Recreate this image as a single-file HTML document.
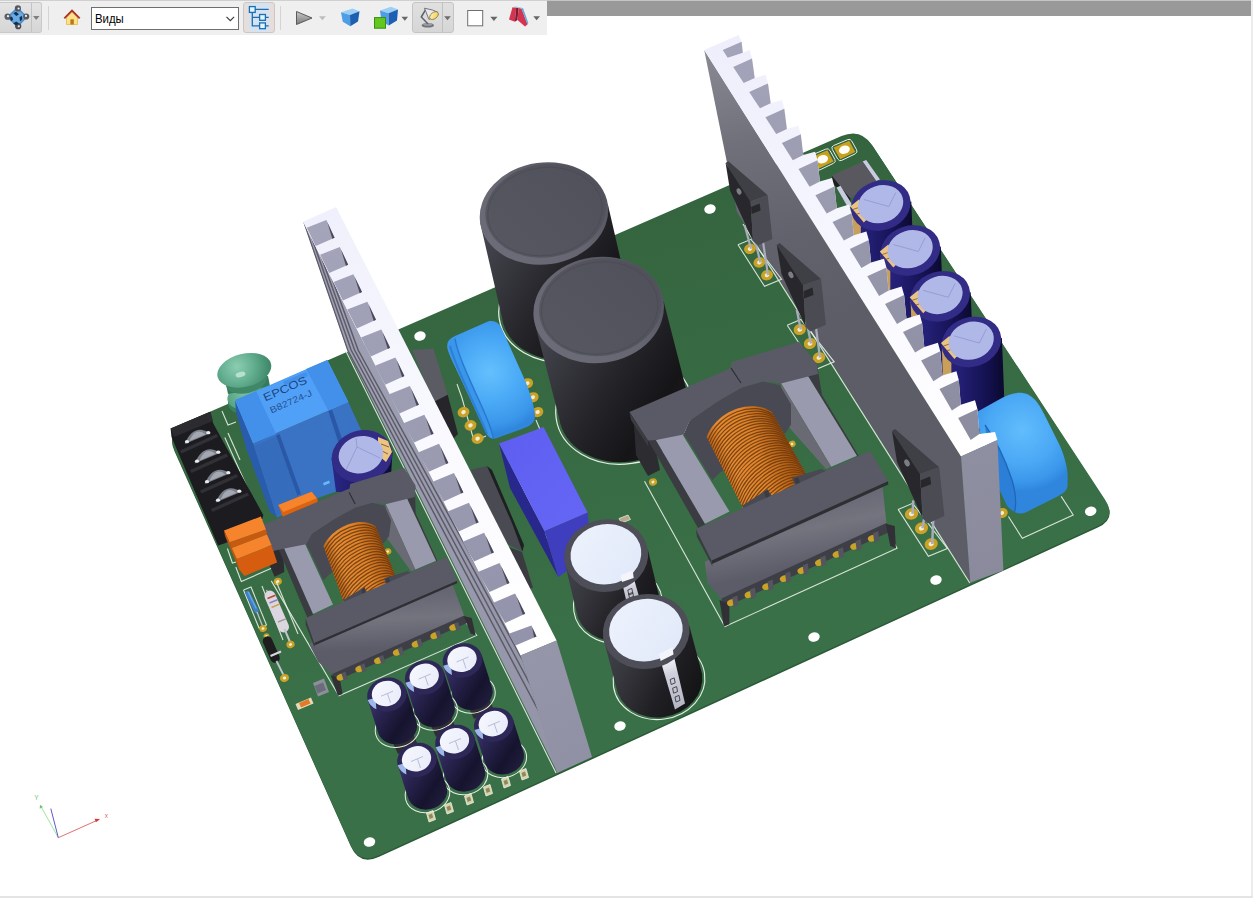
<!DOCTYPE html>
<html lang="ru"><head><meta charset="utf-8"><title>3D PDF</title>
<style>
html,body{margin:0;padding:0;background:#fff;overflow:hidden}
body{width:1253px;height:898px;position:relative;font-family:"Liberation Sans",sans-serif}
#view{position:absolute;left:0;top:0;width:1253px;height:898px}
#strip{position:absolute;left:547px;top:0;width:704px;height:16px;background:#999;border-top:1px solid #c4c4c4;box-sizing:border-box}
#redge{position:absolute;left:1251px;top:0;width:2px;height:898px;background:#ececec}
#bedge{position:absolute;left:0;top:896px;width:1253px;height:2px;background:#e4e4e4}
</style></head><body>
<svg id="view" width="1253" height="898" viewBox="0 0 1253 898">
<defs>
<linearGradient id="gboard" gradientUnits="userSpaceOnUse" x1="600" y1="180" x2="700" y2="620"><stop offset="0" stop-color="#34643e"/><stop offset="1" stop-color="#3a7047"/></linearGradient>
<linearGradient id="gcr0" gradientUnits="userSpaceOnUse" x1="850.8" y1="205.5" x2="911.8" y2="205.5"><stop offset="0" stop-color="#2a2686"/><stop offset="0.3" stop-color="#231f74"/><stop offset="0.75" stop-color="#141150"/><stop offset="1" stop-color="#0c0a30"/></linearGradient>
<linearGradient id="gcr1" gradientUnits="userSpaceOnUse" x1="880.3" y1="250.5" x2="941.3" y2="250.5"><stop offset="0" stop-color="#2a2686"/><stop offset="0.3" stop-color="#231f74"/><stop offset="0.75" stop-color="#141150"/><stop offset="1" stop-color="#0c0a30"/></linearGradient>
<linearGradient id="gcr2" gradientUnits="userSpaceOnUse" x1="910.2" y1="296.3" x2="971.2" y2="296.3"><stop offset="0" stop-color="#2a2686"/><stop offset="0.3" stop-color="#231f74"/><stop offset="0.75" stop-color="#141150"/><stop offset="1" stop-color="#0c0a30"/></linearGradient>
<linearGradient id="gcr3" gradientUnits="userSpaceOnUse" x1="941.4" y1="342" x2="1002.4" y2="342"><stop offset="0" stop-color="#2a2686"/><stop offset="0.3" stop-color="#231f74"/><stop offset="0.75" stop-color="#141150"/><stop offset="1" stop-color="#0c0a30"/></linearGradient>
<radialGradient id="gtor" gradientUnits="userSpaceOnUse" cx="1022" cy="430" r="62"><stop offset="0" stop-color="#62bdfc"/><stop offset="0.55" stop-color="#4aa8f5"/><stop offset="0.85" stop-color="#3a96ea"/><stop offset="1" stop-color="#2f86dc"/></radialGradient>
<linearGradient id="ghs2l" gradientUnits="userSpaceOnUse" x1="700" y1="50" x2="760" y2="330"><stop offset="0" stop-color="#8a8a95"/><stop offset="0.35" stop-color="#70707b"/><stop offset="0.7" stop-color="#62626c"/><stop offset="1" stop-color="#5d5d67"/></linearGradient>
<linearGradient id="ghs2w" gradientUnits="userSpaceOnUse" x1="710" y1="40" x2="990" y2="440"><stop offset="0" stop-color="#eeeefc"/><stop offset="0.6" stop-color="#f8f8ff"/><stop offset="1" stop-color="#ffffff"/></linearGradient>
<linearGradient id="ghs2g" gradientUnits="userSpaceOnUse" x1="720" y1="40" x2="980" y2="440"><stop offset="0" stop-color="#a4a4ba"/><stop offset="1" stop-color="#8c8ca0"/></linearGradient>
<linearGradient id="ghs2f" gradientUnits="userSpaceOnUse" x1="960" y1="450" x2="1000" y2="580"><stop offset="0" stop-color="#8f8fa2"/><stop offset="1" stop-color="#8a8a9c"/></linearGradient>
<linearGradient id="gbc1" gradientUnits="userSpaceOnUse" x1="479.5" y1="213.5" x2="630.5" y2="309"><stop offset="0" stop-color="#4c4c56"/><stop offset="0.2" stop-color="#3e3e46"/><stop offset="0.55" stop-color="#25252a"/><stop offset="0.85" stop-color="#151518"/><stop offset="1" stop-color="#1b1b1f"/></linearGradient>
<linearGradient id="gbr1" gradientUnits="userSpaceOnUse" x1="479.5" y1="264.5" x2="608.5" y2="162.5"><stop offset="0" stop-color="#6e6e7a"/><stop offset="0.5" stop-color="#666672"/><stop offset="1" stop-color="#4c4c56"/></linearGradient>
<linearGradient id="gbt1" gradientUnits="userSpaceOnUse" x1="479.5" y1="264.5" x2="608.5" y2="162.5"><stop offset="0" stop-color="#585863"/><stop offset="1" stop-color="#50505a"/></linearGradient>
<radialGradient id="gdisc" gradientUnits="userSpaceOnUse" cx="490" cy="372" r="62"><stop offset="0" stop-color="#64c0fd"/><stop offset="0.5" stop-color="#4aa9f6"/><stop offset="0.85" stop-color="#3a96ea"/><stop offset="1" stop-color="#2f86dc"/></radialGradient>
<linearGradient id="gbc2" gradientUnits="userSpaceOnUse" x1="533.2" y1="310" x2="689.5" y2="409"><stop offset="0" stop-color="#4c4c56"/><stop offset="0.2" stop-color="#3e3e46"/><stop offset="0.55" stop-color="#25252a"/><stop offset="0.85" stop-color="#151518"/><stop offset="1" stop-color="#1b1b1f"/></linearGradient>
<linearGradient id="gbr2" gradientUnits="userSpaceOnUse" x1="533.2" y1="363" x2="664.2" y2="257"><stop offset="0" stop-color="#6e6e7a"/><stop offset="0.5" stop-color="#666672"/><stop offset="1" stop-color="#4c4c56"/></linearGradient>
<linearGradient id="gbt2" gradientUnits="userSpaceOnUse" x1="533.2" y1="363" x2="664.2" y2="257"><stop offset="0" stop-color="#585863"/><stop offset="1" stop-color="#50505a"/></linearGradient>
<linearGradient id="gpurp" gradientUnits="userSpaceOnUse" x1="500" y1="440" x2="590" y2="530"><stop offset="0" stop-color="#5e5ef0"/><stop offset="1" stop-color="#6666f6"/></linearGradient>
<linearGradient id="gmc1" gradientUnits="userSpaceOnUse" x1="564.1" y1="555.6" x2="660.1" y2="605"><stop offset="0" stop-color="#45454e"/><stop offset="0.3" stop-color="#38383f"/><stop offset="0.7" stop-color="#202024"/><stop offset="1" stop-color="#151518"/></linearGradient>
<linearGradient id="gms1" gradientUnits="userSpaceOnUse" x1="622" y1="582" x2="627" y2="604"><stop offset="0" stop-color="#f4f5fa"/><stop offset="0.3" stop-color="#d0d1dc"/><stop offset="1" stop-color="#b4b5c2"/></linearGradient>
<linearGradient id="gmt1" gradientUnits="userSpaceOnUse" x1="564.1" y1="519.3" x2="648.3" y2="591.9"><stop offset="0" stop-color="#eef3fd"/><stop offset="1" stop-color="#dfe7f8"/></linearGradient>
<linearGradient id="gmc2" gradientUnits="userSpaceOnUse" x1="602.7" y1="631.5" x2="702.5" y2="680"><stop offset="0" stop-color="#45454e"/><stop offset="0.3" stop-color="#38383f"/><stop offset="0.7" stop-color="#202024"/><stop offset="1" stop-color="#151518"/></linearGradient>
<linearGradient id="gms2" gradientUnits="userSpaceOnUse" x1="660.6" y1="661" x2="675" y2="709.5"><stop offset="0" stop-color="#f4f5fa"/><stop offset="0.3" stop-color="#d0d1dc"/><stop offset="1" stop-color="#b4b5c2"/></linearGradient>
<linearGradient id="gmt2" gradientUnits="userSpaceOnUse" x1="602.7" y1="594.1" x2="689.7" y2="668.9"><stop offset="0" stop-color="#eef3fd"/><stop offset="1" stop-color="#dfe7f8"/></linearGradient>
<linearGradient id="gcoil1" gradientUnits="userSpaceOnUse" x1="706.7" y1="437" x2="772" y2="412.1"><stop offset="0" stop-color="#b86418"/><stop offset="0.2" stop-color="#e68c32"/><stop offset="0.6" stop-color="#e08429"/><stop offset="1" stop-color="#a8560f"/></linearGradient>
<linearGradient id="gbob1" gradientUnits="userSpaceOnUse" x1="790" y1="500" x2="803" y2="568"><stop offset="0" stop-color="#666673"/><stop offset="0.45" stop-color="#74747f"/><stop offset="1" stop-color="#5c5c69"/></linearGradient>
<linearGradient id="ghs1l" gradientUnits="userSpaceOnUse" x1="300" y1="220" x2="560" y2="770"><stop offset="0" stop-color="#a2a2b6"/><stop offset="1" stop-color="#9494a8"/></linearGradient>
<clipPath id="chs1"><polygon points="303.1,221.8 520.6,655.6 557.6,772.6 347,350"/></clipPath>
<linearGradient id="ghs1w" gradientUnits="userSpaceOnUse" x1="310" y1="215" x2="540" y2="650"><stop offset="0" stop-color="#f0f0fc"/><stop offset="0.6" stop-color="#fafaff"/><stop offset="1" stop-color="#ffffff"/></linearGradient>
<linearGradient id="ghs1g" gradientUnits="userSpaceOnUse" x1="300" y1="220" x2="540" y2="650"><stop offset="0" stop-color="#a4a4ba"/><stop offset="1" stop-color="#9292aa"/></linearGradient>
<linearGradient id="ghs1f" gradientUnits="userSpaceOnUse" x1="520" y1="650" x2="590" y2="770"><stop offset="0" stop-color="#9696aa"/><stop offset="1" stop-color="#9090a4"/></linearGradient>
<radialGradient id="gchoke" gradientUnits="userSpaceOnUse" cx="238" cy="365" r="32"><stop offset="0" stop-color="#8ccdb2"/><stop offset="0.5" stop-color="#66b092"/><stop offset="1" stop-color="#3f8b6b"/></radialGradient>
<radialGradient id="gchoke2" gradientUnits="userSpaceOnUse" cx="244" cy="392" r="26"><stop offset="0" stop-color="#78bfa2"/><stop offset="0.6" stop-color="#5aa687"/><stop offset="1" stop-color="#3b8363"/></radialGradient>
<linearGradient id="gsc" gradientUnits="userSpaceOnUse" x1="332" y1="456" x2="392" y2="456"><stop offset="0" stop-color="#2a2686"/><stop offset="0.5" stop-color="#1e1a68"/><stop offset="1" stop-color="#0e0c34"/></linearGradient>
<linearGradient id="gcoil2" gradientUnits="userSpaceOnUse" x1="323.4" y1="546.2" x2="375.8" y2="526.7"><stop offset="0" stop-color="#b86418"/><stop offset="0.2" stop-color="#e68c32"/><stop offset="0.6" stop-color="#e08429"/><stop offset="1" stop-color="#a8560f"/></linearGradient>
<linearGradient id="gbob2" gradientUnits="userSpaceOnUse" x1="380.4" y1="595.4" x2="383.3" y2="648.6"><stop offset="0" stop-color="#666673"/><stop offset="0.45" stop-color="#74747f"/><stop offset="1" stop-color="#5c5c69"/></linearGradient>
<linearGradient id="gsm0" gradientUnits="userSpaceOnUse" x1="442.5" y1="660.5" x2="493" y2="693.5"><stop offset="0" stop-color="#45407a"/><stop offset="0.3" stop-color="#2c2756"/><stop offset="0.75" stop-color="#16132e"/><stop offset="1" stop-color="#201d3c"/></linearGradient>
<linearGradient id="gst0" gradientUnits="userSpaceOnUse" x1="442.5" y1="643.5" x2="482.5" y2="677.5"><stop offset="0" stop-color="#fafbff"/><stop offset="1" stop-color="#e4e7f8"/></linearGradient>
<linearGradient id="gsm1" gradientUnits="userSpaceOnUse" x1="404.7" y1="677.5" x2="455.2" y2="710.5"><stop offset="0" stop-color="#45407a"/><stop offset="0.3" stop-color="#2c2756"/><stop offset="0.75" stop-color="#16132e"/><stop offset="1" stop-color="#201d3c"/></linearGradient>
<linearGradient id="gst1" gradientUnits="userSpaceOnUse" x1="404.7" y1="660.5" x2="444.7" y2="694.5"><stop offset="0" stop-color="#fafbff"/><stop offset="1" stop-color="#e4e7f8"/></linearGradient>
<linearGradient id="gsm2" gradientUnits="userSpaceOnUse" x1="367" y1="694.7" x2="417.5" y2="727.7"><stop offset="0" stop-color="#45407a"/><stop offset="0.3" stop-color="#2c2756"/><stop offset="0.75" stop-color="#16132e"/><stop offset="1" stop-color="#201d3c"/></linearGradient>
<linearGradient id="gst2" gradientUnits="userSpaceOnUse" x1="367" y1="677.7" x2="407" y2="711.7"><stop offset="0" stop-color="#fafbff"/><stop offset="1" stop-color="#e4e7f8"/></linearGradient>
<linearGradient id="gsm3" gradientUnits="userSpaceOnUse" x1="473.8" y1="724.8" x2="524.3" y2="757.8"><stop offset="0" stop-color="#45407a"/><stop offset="0.3" stop-color="#2c2756"/><stop offset="0.75" stop-color="#16132e"/><stop offset="1" stop-color="#201d3c"/></linearGradient>
<linearGradient id="gst3" gradientUnits="userSpaceOnUse" x1="473.8" y1="707.8" x2="513.8" y2="741.8"><stop offset="0" stop-color="#fafbff"/><stop offset="1" stop-color="#e4e7f8"/></linearGradient>
<linearGradient id="gsm4" gradientUnits="userSpaceOnUse" x1="435" y1="742" x2="485.5" y2="775"><stop offset="0" stop-color="#45407a"/><stop offset="0.3" stop-color="#2c2756"/><stop offset="0.75" stop-color="#16132e"/><stop offset="1" stop-color="#201d3c"/></linearGradient>
<linearGradient id="gst4" gradientUnits="userSpaceOnUse" x1="435" y1="725" x2="475" y2="759"><stop offset="0" stop-color="#fafbff"/><stop offset="1" stop-color="#e4e7f8"/></linearGradient>
<linearGradient id="gsm5" gradientUnits="userSpaceOnUse" x1="397" y1="760" x2="447.5" y2="793"><stop offset="0" stop-color="#45407a"/><stop offset="0.3" stop-color="#2c2756"/><stop offset="0.75" stop-color="#16132e"/><stop offset="1" stop-color="#201d3c"/></linearGradient>
<linearGradient id="gst5" gradientUnits="userSpaceOnUse" x1="397" y1="743" x2="437" y2="777"><stop offset="0" stop-color="#fafbff"/><stop offset="1" stop-color="#e4e7f8"/></linearGradient>
</defs>
<path d="M174.6 451.4Q166 432.2 185.2 423.8L842 137.1Q861.2 128.7 872.7 146.3L1105.4 501.2Q1116.9 518.8 1097.8 527.5L378.6 857.1Q359.5 865.8 350.9 846.6Z" fill="#2a5a38"/>
<path d="M174.6 450.2Q166 431 185.2 422.6L841.5 136.1Q860.7 127.7 872.2 145.3L1105.1 499.7Q1116.6 517.3 1097.5 526L378.3 855.6Q359.2 864.3 350.6 845.1Z" fill="url(#gboard)"/>
<ellipse cx="420" cy="336" rx="5.8" ry="4.7" fill="#ffffff" transform="rotate(-15 420 336)"/>
<ellipse cx="710" cy="209" rx="5.8" ry="4.7" fill="#ffffff" transform="rotate(-15 710 209)"/>
<ellipse cx="369.5" cy="842" rx="5.8" ry="4.7" fill="#ffffff" transform="rotate(-15 369.5 842)"/>
<ellipse cx="814" cy="637" rx="5.8" ry="4.7" fill="#ffffff" transform="rotate(-15 814 637)"/>
<ellipse cx="1090.7" cy="511.2" rx="5.8" ry="4.7" fill="#ffffff" transform="rotate(-15 1090.7 511.2)"/>
<ellipse cx="936" cy="580" rx="5.8" ry="4.7" fill="#ffffff" transform="rotate(-15 936 580)"/>
<ellipse cx="620" cy="726" rx="5.8" ry="4.7" fill="#ffffff" transform="rotate(-15 620 726)"/>
<path d="M810.5 158.9Q809 156.3 811.7 155.1L825.8 149.1Q828.6 147.9 830 150.6L834.8 159.3Q836.2 161.9 833.5 163.3L820.1 169.8Q817.4 171.1 815.9 168.5Z" fill="none" stroke="#e8efe8" stroke-width="1" stroke-linejoin="round"/>
<polygon points="811.7,156.9 827.4,150.2 833.5,161.4 818.4,168.7" fill="#c6a11f"/>
<ellipse cx="822.6" cy="159.2" rx="5.6" ry="4.1" fill="#fffdf6" transform="rotate(-18 822.6 159.2)"/>
<path d="M832.3 149.4Q830.8 146.8 833.5 145.6L847.6 139.6Q850.4 138.4 851.8 141.1L856.6 149.8Q858 152.4 855.3 153.8L841.9 160.3Q839.1 161.6 837.7 159Z" fill="none" stroke="#e8efe8" stroke-width="1" stroke-linejoin="round"/>
<polygon points="833.5,147.4 849.2,140.7 855.3,151.9 840.2,159.2" fill="#c6a11f"/>
<ellipse cx="844.4" cy="149.7" rx="5.6" ry="4.1" fill="#fffdf6" transform="rotate(-18 844.4 149.7)"/>
<polyline points="1008.4,516.5 1022.3,538.3 1073.2,514.9 1061.2,496.4" fill="none" stroke="#e8efe8" stroke-width="1.1" stroke-opacity="0.9"/>
<ellipse cx="1002" cy="513" rx="5.8" ry="5" fill="#c9a227" transform="rotate(-20 1002 513)"/>
<ellipse cx="1002" cy="513" rx="2.2" ry="1.9" fill="#f4ecd0" transform="rotate(-20 1002 513)"/>
<polygon points="862.6,161.4 866.2,160 880,179.5 876,181" fill="#c9cbe0"/>
<polygon points="831.8,175.4 850.3,198.3 851,206 833,183" fill="#1e1e22"/>
<polygon points="831.8,175.4 862.6,161.4 877,182 850.3,198.3" fill="#5a585f"/>
<polygon points="836.5,187.5 840.5,185.8 853,206 848,207.5" fill="#c9cbe0"/>
<path d="M850.8 207.5 L853.8 273.5 A30 25 -15 0 0 913.8 265.5 L911.3 201.5 Z" fill="url(#gcr0)"/>
<polygon points="851.3,209.5 860.8,219.5 860.8,245.5 852.3,245.5" fill="#c8a05a"/>
<ellipse cx="880.8" cy="205.5" rx="30.3" ry="24.8" fill="#322c86" transform="rotate(-18 880.8 205.5)"/>
<path d="M850.3 206.5 L858.8 199.5 L868.8 217.5 L863.8 222.5 Z" fill="#ecc482"/>
<polyline points="852.8,209.5 861.8,206.5" fill="none" stroke="#6b4a2a" stroke-width="0.7"/>
<polyline points="855.8,214.5 864.8,211.5" fill="none" stroke="#6b4a2a" stroke-width="0.7"/>
<ellipse cx="880.6" cy="204.2" rx="23" ry="18.7" fill="#b0b8e8" transform="rotate(-18 880.6 204.2)"/>
<polyline points="863.8,199.5 888.8,206.5 895.8,192.5" fill="none" stroke="#8d8fc8" stroke-width="0.7"/>
<path d="M880.3 252.5 L883.3 318.5 A30 25 -15 0 0 943.3 310.5 L940.8 246.5 Z" fill="url(#gcr1)"/>
<polygon points="880.8,254.5 890.3,264.5 890.3,290.5 881.8,290.5" fill="#c8a05a"/>
<ellipse cx="910.3" cy="250.5" rx="30.3" ry="24.8" fill="#322c86" transform="rotate(-18 910.3 250.5)"/>
<path d="M879.8 251.5 L888.3 244.5 L898.3 262.5 L893.3 267.5 Z" fill="#ecc482"/>
<polyline points="882.3,254.5 891.3,251.5" fill="none" stroke="#6b4a2a" stroke-width="0.7"/>
<polyline points="885.3,259.5 894.3,256.5" fill="none" stroke="#6b4a2a" stroke-width="0.7"/>
<ellipse cx="910.1" cy="249.2" rx="23" ry="18.7" fill="#b0b8e8" transform="rotate(-18 910.1 249.2)"/>
<polyline points="893.3,244.5 918.3,251.5 925.3,237.5" fill="none" stroke="#8d8fc8" stroke-width="0.7"/>
<path d="M910.2 298.3 L913.2 364.3 A30 25 -15 0 0 973.2 356.3 L970.7 292.3 Z" fill="url(#gcr2)"/>
<polygon points="910.7,300.3 920.2,310.3 920.2,336.3 911.7,336.3" fill="#c8a05a"/>
<ellipse cx="940.2" cy="296.3" rx="30.3" ry="24.8" fill="#322c86" transform="rotate(-18 940.2 296.3)"/>
<path d="M909.7 297.3 L918.2 290.3 L928.2 308.3 L923.2 313.3 Z" fill="#ecc482"/>
<polyline points="912.2,300.3 921.2,297.3" fill="none" stroke="#6b4a2a" stroke-width="0.7"/>
<polyline points="915.2,305.3 924.2,302.3" fill="none" stroke="#6b4a2a" stroke-width="0.7"/>
<ellipse cx="940" cy="295" rx="23" ry="18.7" fill="#b0b8e8" transform="rotate(-18 940 295)"/>
<polyline points="923.2,290.3 948.2,297.3 955.2,283.3" fill="none" stroke="#8d8fc8" stroke-width="0.7"/>
<path d="M941.4 344 L944.4 410 A30 25 -15 0 0 1004.4 402 L1001.9 338 Z" fill="url(#gcr3)"/>
<polygon points="941.9,346 951.4,356 951.4,382 942.9,382" fill="#c8a05a"/>
<ellipse cx="971.4" cy="342" rx="30.3" ry="24.8" fill="#322c86" transform="rotate(-18 971.4 342)"/>
<path d="M940.9 343 L949.4 336 L959.4 354 L954.4 359 Z" fill="#ecc482"/>
<polyline points="943.4,346 952.4,343" fill="none" stroke="#6b4a2a" stroke-width="0.7"/>
<polyline points="946.4,351 955.4,348" fill="none" stroke="#6b4a2a" stroke-width="0.7"/>
<ellipse cx="971.2" cy="340.7" rx="23" ry="18.7" fill="#b0b8e8" transform="rotate(-18 971.2 340.7)"/>
<polyline points="954.4,336 979.4,343 986.4,329" fill="none" stroke="#8d8fc8" stroke-width="0.7"/>
<path d="M975 413 L1000.5 398.7 C1010 393 1020 391 1028.6 394.8 C1036 399 1040 406 1044.2 414.3 L1059.8 445.5 C1064 455 1067 466 1067.6 473.5 L1067.6 486 C1067 492 1060 495 1053.5 498.5 L1025.5 512.5 C1021 514 1017 513.5 1014.6 511.7 C1010 509 1008 507 1006.8 504.7 L990 470 Z" fill="url(#gtor)"/>
<path d="M985 425 C996 440 1006 462 1012 480 C1016 494 1016 506 1014.6 511.7 C1010 509 1008 507 1006.8 504.7 L990 470 Z" fill="#2c7fd6"/>
<path d="M985 425 C996 440 1006 462 1012 480 C1016 494 1016 506 1014.6 511.7" fill="none" stroke="#1f66b8" stroke-width="1.3" stroke-linejoin="round"/>
<polygon points="704.2,50.1 961,456.5 970.3,582.5 737,212" fill="url(#ghs2l)"/>
<polyline points="743,224 969.8,583" fill="none" stroke="#e8efe8" stroke-width="1.2" stroke-opacity="0.9"/>
<polygon points="704.2,50.1 738.6,35 741.6,41.8 742.8,52.7 749.6,49.9 752,58.5 754.7,77.9 765.6,74.8 768,83.4 770.7,103.3 781.9,100.1 784.3,108.7 786.9,129 798.4,125.7 800.8,134.3 803.3,155.1 815.1,151.7 817.5,160.3 819.9,181.5 832,178 834.4,186.6 836.8,208.2 849.1,204.6 851.5,213.2 853.9,235.2 866.4,231.5 868.8,240.1 871.1,262.6 884,258.8 886.4,267.4 888.6,290.4 901.7,286.4 904.1,295 906.4,318.5 919.7,314.4 922.1,323 924.3,346.9 937.9,342.7 940.3,351.3 942.4,375.6 956.4,371.3 958.8,379.9 960.8,404.7 975,400.3 977.4,408.9 979.4,434.1 995,431.9 997.4,440 961,456.5" fill="url(#ghs2w)"/>
<polygon points="722.7,50 741.6,41.8 742.8,52.7 727.7,57.7" fill="url(#ghs2g)"/>
<polygon points="733.2,66.9 752,58.5 754.7,77.9 743.7,82.9" fill="url(#ghs2g)"/>
<polygon points="749.2,91.9 768,83.4 770.7,103.3 759.9,108.3" fill="url(#ghs2g)"/>
<polygon points="765.4,117.2 784.3,108.7 786.9,129 776.2,134.1" fill="url(#ghs2g)"/>
<polygon points="781.9,142.9 800.8,134.3 803.3,155.1 792.8,160.2" fill="url(#ghs2g)"/>
<polygon points="798.5,168.9 817.5,160.3 819.9,181.5 809.6,186.7" fill="url(#ghs2g)"/>
<polygon points="815.4,195.3 834.4,186.6 836.8,208.2 826.7,213.5" fill="url(#ghs2g)"/>
<polygon points="832.5,221.9 851.5,213.2 853.9,235.2 843.9,240.6" fill="url(#ghs2g)"/>
<polygon points="849.8,249 868.8,240.1 871.1,262.6 861.4,268.1" fill="url(#ghs2g)"/>
<polygon points="867.3,276.3 886.4,267.4 888.6,290.4 879.1,295.9" fill="url(#ghs2g)"/>
<polygon points="885,304 904.1,295 906.4,318.5 897,324" fill="url(#ghs2g)"/>
<polygon points="903,332 922.1,323 924.3,346.9 915.1,352.5" fill="url(#ghs2g)"/>
<polygon points="921.1,360.4 940.3,351.3 942.4,375.6 933.4,381.3" fill="url(#ghs2g)"/>
<polygon points="939.5,389.1 958.8,379.9 960.8,404.7 951.9,410.4" fill="url(#ghs2g)"/>
<polygon points="958.1,418.1 977.4,408.9 979.4,434.1 970.7,439.9" fill="url(#ghs2g)"/>
<polygon points="961,456.5 997.4,440 1003.4,570.4 970.3,582.5" fill="url(#ghs2f)"/>
<polyline points="738,244.8 751,239.3 781.5,279.2 764.5,286.2 738,244.8" fill="none" stroke="#e8efe8" stroke-width="1.1" stroke-opacity="0.9"/>
<ellipse cx="750" cy="248.8" rx="6" ry="5.2" fill="#c9a227" transform="rotate(-20 750 248.8)"/>
<ellipse cx="750" cy="248.8" rx="2.3" ry="2" fill="#f4ecd0" transform="rotate(-20 750 248.8)"/>
<ellipse cx="759.4" cy="262.4" rx="6" ry="5.2" fill="#c9a227" transform="rotate(-20 759.4 262.4)"/>
<ellipse cx="759.4" cy="262.4" rx="2.3" ry="2" fill="#f4ecd0" transform="rotate(-20 759.4 262.4)"/>
<ellipse cx="767" cy="275.2" rx="6" ry="5.2" fill="#c9a227" transform="rotate(-20 767 275.2)"/>
<ellipse cx="767" cy="275.2" rx="2.3" ry="2" fill="#f4ecd0" transform="rotate(-20 767 275.2)"/>
<polyline points="744.6,225 751,248.8" fill="none" stroke="#a9acbc" stroke-width="2.2"/>
<polyline points="754.6,239 760.4,262.4" fill="none" stroke="#a9acbc" stroke-width="2.2"/>
<polyline points="762.6,239 768,275.2" fill="none" stroke="#a9acbc" stroke-width="2.2"/>
<polygon points="725.6,163 728.3,161.2 767.7,195.3 750.6,201.4" fill="#3f3f46"/>
<polygon points="725.6,163 750.6,201.4 753,241 730.1,190.7" fill="#27272c"/>
<polygon points="750.6,201.4 767.7,195.3 772.4,239 757.6,245.5 753,241" fill="#4b4b53"/>
<polygon points="751.1,207 759.6,203.5 760.6,210.5 751.6,214" fill="#27272c"/>
<ellipse cx="739" cy="191.5" rx="2.2" ry="3.3" fill="#7d7d86" transform="rotate(-25 739 191.5)"/>
<polyline points="787.2,325.3 800.8,319.5 834.2,361.8 816.4,369.2 787.2,325.3" fill="none" stroke="#e8efe8" stroke-width="1.1" stroke-opacity="0.9"/>
<ellipse cx="799.8" cy="329.5" rx="6.3" ry="5.5" fill="#c9a227" transform="rotate(-20 799.8 329.5)"/>
<ellipse cx="799.8" cy="329.5" rx="2.5" ry="2.1" fill="#f4ecd0" transform="rotate(-20 799.8 329.5)"/>
<ellipse cx="810" cy="343.5" rx="6.3" ry="5.5" fill="#c9a227" transform="rotate(-20 810 343.5)"/>
<ellipse cx="810" cy="343.5" rx="2.5" ry="2.1" fill="#f4ecd0" transform="rotate(-20 810 343.5)"/>
<ellipse cx="819" cy="357.6" rx="6.3" ry="5.5" fill="#c9a227" transform="rotate(-20 819 357.6)"/>
<ellipse cx="819" cy="357.6" rx="2.5" ry="2.1" fill="#f4ecd0" transform="rotate(-20 819 357.6)"/>
<polyline points="796.8,310.1 800.8,329.5" fill="none" stroke="#a9acbc" stroke-width="2.3100000000000005"/>
<polyline points="807.2,324.8 811,343.5" fill="none" stroke="#a9acbc" stroke-width="2.3100000000000005"/>
<polyline points="815.6,324.8 820,357.6" fill="none" stroke="#a9acbc" stroke-width="2.3100000000000005"/>
<polygon points="776.8,245 779.6,243.1 821,278.9 803,285.3" fill="#3f3f46"/>
<polygon points="776.8,245 803,285.3 805.6,326.9 781.5,274.1" fill="#27272c"/>
<polygon points="803,285.3 821,278.9 825.9,324.8 810.4,331.6 805.6,326.9" fill="#4b4b53"/>
<polygon points="803.6,291.2 812.5,287.5 813.5,294.9 804.1,298.6" fill="#27272c"/>
<ellipse cx="790.9" cy="274.9" rx="2.3" ry="3.5" fill="#7d7d86" transform="rotate(-25 790.9 274.9)"/>
<polyline points="898.1,509.4 912.6,503.3 947.4,548.5 928.4,556.3 898.1,509.4" fill="none" stroke="#e8efe8" stroke-width="1.1" stroke-opacity="0.9"/>
<ellipse cx="911.5" cy="513.9" rx="6.7" ry="5.8" fill="#c9a227" transform="rotate(-20 911.5 513.9)"/>
<ellipse cx="911.5" cy="513.9" rx="2.6" ry="2.2" fill="#f4ecd0" transform="rotate(-20 911.5 513.9)"/>
<ellipse cx="921.5" cy="528.3" rx="6.7" ry="5.8" fill="#c9a227" transform="rotate(-20 921.5 528.3)"/>
<ellipse cx="921.5" cy="528.3" rx="2.6" ry="2.2" fill="#f4ecd0" transform="rotate(-20 921.5 528.3)"/>
<ellipse cx="931.2" cy="544" rx="6.7" ry="5.8" fill="#c9a227" transform="rotate(-20 931.2 544)"/>
<ellipse cx="931.2" cy="544" rx="2.6" ry="2.2" fill="#f4ecd0" transform="rotate(-20 931.2 544)"/>
<polyline points="913.3,500.4 912.5,513.9" fill="none" stroke="#a9acbc" stroke-width="2.4640000000000004"/>
<polyline points="924.5,516.1 922.5,528.3" fill="none" stroke="#a9acbc" stroke-width="2.4640000000000004"/>
<polyline points="933.4,516.1 932.2,544" fill="none" stroke="#a9acbc" stroke-width="2.4640000000000004"/>
<polygon points="892,431 895,429 939.2,467.2 920,474" fill="#3f3f46"/>
<polygon points="892,431 920,474 922.7,518.4 897,462" fill="#27272c"/>
<polygon points="920,474 939.2,467.2 944.4,516.1 927.8,523.4 922.7,518.4" fill="#4b4b53"/>
<polygon points="920.6,480.3 930.1,476.4 931.2,484.2 921.1,488.1" fill="#27272c"/>
<ellipse cx="907" cy="462.9" rx="2.5" ry="3.7" fill="#7d7d86" transform="rotate(-25 907 462.9)"/>
<ellipse cx="566" cy="309" rx="67.5" ry="53" fill="none" transform="rotate(-8 566 309)" stroke="#e8efe8" stroke-width="1.2"/>
<path d="M480.1 222.5 L502.1 318 A64.5 51 -8 0 0 629.9 300 L607.9 204.5 Z" fill="url(#gbc1)"/>
<ellipse cx="544" cy="213.5" rx="64.5" ry="51" fill="url(#gbr1)" transform="rotate(-8 544 213.5)"/>
<ellipse cx="545.6" cy="210.9" rx="60.5" ry="46.5" fill="url(#gbt1)" transform="rotate(-8 545.6 210.9)"/>
<ellipse cx="545" cy="211.5" rx="57.5" ry="44" fill="none" transform="rotate(-8 545 211.5)" stroke="#494952" stroke-width="0.7"/>
<polyline points="457,384 462,398 474,441 486,436" fill="none" stroke="#e8efe8" stroke-width="1.1" stroke-opacity="0.9"/>
<polyline points="536,420 541,432" fill="none" stroke="#e8efe8" stroke-width="1.1" stroke-opacity="0.9"/>
<ellipse cx="463.5" cy="412.1" rx="6" ry="5.2" fill="#c9a227" transform="rotate(-20 463.5 412.1)"/>
<ellipse cx="463.5" cy="412.1" rx="2.3" ry="2" fill="#f4ecd0" transform="rotate(-20 463.5 412.1)"/>
<ellipse cx="470.5" cy="425.4" rx="6" ry="5.2" fill="#c9a227" transform="rotate(-20 470.5 425.4)"/>
<ellipse cx="470.5" cy="425.4" rx="2.3" ry="2" fill="#f4ecd0" transform="rotate(-20 470.5 425.4)"/>
<ellipse cx="477.6" cy="438.6" rx="6" ry="5.2" fill="#c9a227" transform="rotate(-20 477.6 438.6)"/>
<ellipse cx="477.6" cy="438.6" rx="2.3" ry="2" fill="#f4ecd0" transform="rotate(-20 477.6 438.6)"/>
<ellipse cx="527.4" cy="383.3" rx="5.8" ry="5" fill="#c9a227" transform="rotate(-20 527.4 383.3)"/>
<ellipse cx="527.4" cy="383.3" rx="2.2" ry="1.9" fill="#f4ecd0" transform="rotate(-20 527.4 383.3)"/>
<ellipse cx="532.9" cy="397.3" rx="5.8" ry="5" fill="#c9a227" transform="rotate(-20 532.9 397.3)"/>
<ellipse cx="532.9" cy="397.3" rx="2.2" ry="1.9" fill="#f4ecd0" transform="rotate(-20 532.9 397.3)"/>
<ellipse cx="537.6" cy="412.1" rx="5.8" ry="5" fill="#c9a227" transform="rotate(-20 537.6 412.1)"/>
<ellipse cx="537.6" cy="412.1" rx="2.2" ry="1.9" fill="#f4ecd0" transform="rotate(-20 537.6 412.1)"/>
<path d="M447.5 348 C446.5 342 449 339 455 336 L488 321.5 C494 320 498 322 501 327 L524 378 C530 392 535 408 535 416 C535 423 530 426 522 429 L497 438 C491 440 488 437 485 431 L461 379 C455 366 448.5 354 447.5 348 Z" fill="url(#gdisc)"/>
<path d="M447.5 348 C448 343 451 340 455 338.5 C457 352 467 374 477 396 C485 413 491 427 493.5 438.5 C489 438 487 435 485 431 L461 379 C455 366 448.5 354 447.5 348 Z" fill="#3a96ea"/>
<path d="M455 338.5 C457 352 467 374 477 396 C485 413 491 427 493.5 438.5" fill="none" stroke="#2a78cc" stroke-width="1.4" stroke-linejoin="round"/>
<path d="M450 346 C453 358 462 378 471 398 C478 413 484 426 487 434" fill="none" stroke="#2672c4" stroke-width="2.2" stroke-linejoin="round" stroke-opacity="0.6"/>
<ellipse cx="624" cy="409" rx="68.5" ry="55" fill="none" transform="rotate(-8 624 409)" stroke="#e8efe8" stroke-width="1.2"/>
<path d="M533.8 319.1 L559.1 418.1 A65.5 53 -8 0 0 688.9 399.9 L663.6 300.9 Z" fill="url(#gbc2)"/>
<ellipse cx="598.7" cy="310" rx="65.5" ry="53" fill="url(#gbr2)" transform="rotate(-8 598.7 310)"/>
<ellipse cx="600.3" cy="307.4" rx="61.5" ry="48.5" fill="url(#gbt2)" transform="rotate(-8 600.3 307.4)"/>
<ellipse cx="599.7" cy="308" rx="58.5" ry="46" fill="none" transform="rotate(-8 599.7 308)" stroke="#494952" stroke-width="0.7"/>
<polyline points="505,452 548,540" fill="none" stroke="#e8efe8" stroke-width="1.1" stroke-opacity="0.9"/>
<polygon points="499,443.5 544.5,531 558.4,577 510,488" fill="#28288c"/>
<polygon points="544.5,531 587.5,512.5 592,553 558.4,577" fill="#3e3ebe"/>
<polygon points="499,443.5 543.5,427 587.5,512.5 544.5,531" fill="url(#gpurp)"/>
<polygon points="619,518.5 628,515 630.5,519.5 621.5,523" fill="#b8a98c" stroke="#e8efe8" stroke-width="0.7" stroke-linejoin="round"/>
<ellipse cx="618" cy="605" rx="44.6" ry="38.3" fill="none" transform="rotate(-8 618 605)" stroke="#e8efe8" stroke-width="1.1"/>
<path d="M564.5 561.5 L576.3 610.9 A42.1 36.3 -8 0 0 659.7 599.1 L647.9 549.7 Z" fill="url(#gmc1)"/>
<polygon points="622,582 633.7,578 640,600 627,604" fill="url(#gms1)"/>
<polygon points="627.8,590 631.8,588.4 632.8,593.4 628.8,595" fill="none" stroke="#3a3a42" stroke-width="0.9" stroke-linejoin="round"/>
<polygon points="628.7,594 632.7,592.4 633.7,597.4 629.7,599" fill="none" stroke="#3a3a42" stroke-width="0.9" stroke-linejoin="round"/>
<polygon points="629.7,598 633.7,596.4 634.7,601.4 630.7,603" fill="none" stroke="#3a3a42" stroke-width="0.9" stroke-linejoin="round"/>
<ellipse cx="606.2" cy="555.6" rx="42.1" ry="36.3" fill="#4e4e58" transform="rotate(-8 606.2 555.6)"/>
<ellipse cx="605.9" cy="554.3" rx="35.5" ry="30.1" fill="url(#gmt1)" transform="rotate(-8 605.9 554.3)"/>
<polygon points="620.5,575 632.7,570.5 633.7,578 622,582" fill="#f4f5fa"/>
<ellipse cx="659" cy="680" rx="46" ry="39.4" fill="none" transform="rotate(-8 659 680)" stroke="#e8efe8" stroke-width="1.1"/>
<path d="M603.1 637.6 L615.9 686.1 A43.5 37.4 -8 0 0 702.1 673.9 L689.3 625.4 Z" fill="url(#gmc2)"/>
<polygon points="660.6,661 673.5,654.5 685,703.5 675,709.5" fill="url(#gms2)"/>
<polygon points="670.2,679.5 674.2,677.9 675.2,682.9 671.2,684.5" fill="none" stroke="#3a3a42" stroke-width="0.9" stroke-linejoin="round"/>
<polygon points="672.6,688.2 676.6,686.6 677.6,691.6 673.6,693.2" fill="none" stroke="#3a3a42" stroke-width="0.9" stroke-linejoin="round"/>
<polygon points="675,697 679,695.4 680,700.4 676,702" fill="none" stroke="#3a3a42" stroke-width="0.9" stroke-linejoin="round"/>
<ellipse cx="646.2" cy="631.5" rx="43.5" ry="37.4" fill="#4e4e58" transform="rotate(-8 646.2 631.5)"/>
<ellipse cx="645.9" cy="630.2" rx="36.9" ry="31.2" fill="url(#gmt2)" transform="rotate(-8 645.9 630.2)"/>
<polygon points="659.1,654 672.5,647 673.5,654.5 660.6,661" fill="#f4f5fa"/>
<polyline points="644.5,481.3 724.9,626.5 897,548.3 870,498" fill="none" stroke="#e8efe8" stroke-width="1.1" stroke-opacity="0.9"/>
<polygon points="634,425 650,420 660,470 648,476 636,455" fill="#2c2c31"/>
<ellipse cx="653" cy="482" rx="4.1" ry="3.6" fill="#c9a227" transform="rotate(-20 653 482)"/>
<ellipse cx="653" cy="482" rx="1.6" ry="1.4" fill="#f4ecd0" transform="rotate(-20 653 482)"/>
<ellipse cx="741" cy="478" rx="3.7" ry="3.2" fill="#c9a227" transform="rotate(-20 741 478)"/>
<ellipse cx="741" cy="478" rx="1.4" ry="1.2" fill="#f4ecd0" transform="rotate(-20 741 478)"/>
<ellipse cx="792" cy="444" rx="3.7" ry="3.2" fill="#c9a227" transform="rotate(-20 792 444)"/>
<ellipse cx="792" cy="444" rx="1.4" ry="1.2" fill="#f4ecd0" transform="rotate(-20 792 444)"/>
<polygon points="647.9,440 656,440 706,524 698,528" fill="#3b3b42"/>
<polygon points="805.5,372 817,364.5 822,395 860,458 857,456" fill="#3b3b42"/>
<polygon points="655.8,440 679.2,428.9 729.5,511.5 704.9,523.8" fill="#9a9aae"/>
<polygon points="780.9,383 805.5,371.9 856.9,455.7 831.2,466.8" fill="#9a9aae"/>
<polygon points="780.9,383 831.2,466.8 826,469 787,425 783,400" fill="#6a6a74"/>
<polygon points="683.7,434.4 689.3,421 718.3,400.9 741.8,387.5 763,381.5 779.8,385.3 791,404.3 791,424.4 785.4,433 720,472.4 712.3,480.2 690,443.4" fill="#494953"/>
<polygon points="629.4,412.1 731.1,368.1 731.1,362.3 798.8,341.7 817.1,364.5 818,374 780.9,383.5 763,381.5 741.8,387.5 718.3,400.9 689.3,421 683.7,434.4 656,440 647.9,440.5" fill="#5a5a66"/>
<polygon points="629.4,412.1 647.9,440.5 648.5,447 631,420" fill="#3b3b42"/>
<polyline points="731.1,368.1 741,383" fill="none" stroke="#2f2f35" stroke-width="1.2"/>
<path d="M706.7 437 C716.8 410 752 398 772 412.1 L817.2 494.8 C797.2 480.6 767.7 510 757.6 537 Z" fill="url(#gcoil1)"/>
<path d="M708.2 439.9 C718.3 412.9 753.3 400.4 773.3 414.5" fill="none" stroke="#6a3810" stroke-width="1.25" stroke-linejoin="round" stroke-opacity="0.85"/>
<path d="M709.6 442.8 C719.7 415.8 754.6 402.8 774.6 416.9" fill="none" stroke="#6a3810" stroke-width="1.25" stroke-linejoin="round" stroke-opacity="0.85"/>
<path d="M711.1 445.6 C721.2 418.6 755.9 405.1 775.9 419.2" fill="none" stroke="#6a3810" stroke-width="1.25" stroke-linejoin="round" stroke-opacity="0.85"/>
<path d="M712.6 448.5 C722.6 421.5 757.2 407.5 777.2 421.6" fill="none" stroke="#6a3810" stroke-width="1.25" stroke-linejoin="round" stroke-opacity="0.85"/>
<path d="M714 451.4 C724.1 424.4 758.5 409.9 778.5 424" fill="none" stroke="#6a3810" stroke-width="1.25" stroke-linejoin="round" stroke-opacity="0.85"/>
<path d="M715.5 454.2 C725.6 427.2 759.8 412.2 779.8 426.4" fill="none" stroke="#6a3810" stroke-width="1.25" stroke-linejoin="round" stroke-opacity="0.85"/>
<path d="M716.9 457.1 C727 430.1 761.1 414.6 781.1 428.7" fill="none" stroke="#6a3810" stroke-width="1.25" stroke-linejoin="round" stroke-opacity="0.85"/>
<path d="M718.4 460 C728.5 433 762.4 417 782.4 431.1" fill="none" stroke="#6a3810" stroke-width="1.25" stroke-linejoin="round" stroke-opacity="0.85"/>
<path d="M719.9 462.9 C730 435.9 763.7 419.4 783.7 433.5" fill="none" stroke="#6a3810" stroke-width="1.25" stroke-linejoin="round" stroke-opacity="0.85"/>
<path d="M721.3 465.8 C731.4 438.8 765 421.8 785 435.9" fill="none" stroke="#6a3810" stroke-width="1.25" stroke-linejoin="round" stroke-opacity="0.85"/>
<path d="M722.8 468.6 C732.9 441.6 766.3 424.1 786.3 438.2" fill="none" stroke="#6a3810" stroke-width="1.25" stroke-linejoin="round" stroke-opacity="0.85"/>
<path d="M724.2 471.5 C734.3 444.5 767.6 426.5 787.6 440.6" fill="none" stroke="#6a3810" stroke-width="1.25" stroke-linejoin="round" stroke-opacity="0.85"/>
<path d="M725.7 474.4 C735.8 447.4 768.9 428.9 788.9 443" fill="none" stroke="#6a3810" stroke-width="1.25" stroke-linejoin="round" stroke-opacity="0.85"/>
<path d="M727.2 477.2 C737.3 450.2 770.2 431.2 790.2 445.4" fill="none" stroke="#6a3810" stroke-width="1.25" stroke-linejoin="round" stroke-opacity="0.85"/>
<path d="M728.6 480.1 C738.7 453.1 771.5 433.6 791.5 447.7" fill="none" stroke="#6a3810" stroke-width="1.25" stroke-linejoin="round" stroke-opacity="0.85"/>
<path d="M730.1 483 C740.2 456 772.8 436 792.8 450.1" fill="none" stroke="#6a3810" stroke-width="1.25" stroke-linejoin="round" stroke-opacity="0.85"/>
<path d="M731.6 485.9 C741.7 458.9 774.1 438.4 794.1 452.5" fill="none" stroke="#6a3810" stroke-width="1.25" stroke-linejoin="round" stroke-opacity="0.85"/>
<path d="M733 488.8 C743.1 461.8 775.4 440.8 795.4 454.9" fill="none" stroke="#6a3810" stroke-width="1.25" stroke-linejoin="round" stroke-opacity="0.85"/>
<path d="M734.5 491.6 C744.6 464.6 776.7 443.1 796.7 457.2" fill="none" stroke="#6a3810" stroke-width="1.25" stroke-linejoin="round" stroke-opacity="0.85"/>
<path d="M735.9 494.5 C746 467.5 778 445.5 798 459.6" fill="none" stroke="#6a3810" stroke-width="1.25" stroke-linejoin="round" stroke-opacity="0.85"/>
<path d="M737.4 497.4 C747.5 470.4 779.3 447.9 799.3 462" fill="none" stroke="#6a3810" stroke-width="1.25" stroke-linejoin="round" stroke-opacity="0.85"/>
<path d="M738.9 500.2 C749 473.2 780.6 450.2 800.6 464.4" fill="none" stroke="#6a3810" stroke-width="1.25" stroke-linejoin="round" stroke-opacity="0.85"/>
<path d="M740.3 503.1 C750.4 476.1 781.9 452.6 801.9 466.7" fill="none" stroke="#6a3810" stroke-width="1.25" stroke-linejoin="round" stroke-opacity="0.85"/>
<path d="M741.8 506 C751.9 479 783.2 455 803.2 469.1" fill="none" stroke="#6a3810" stroke-width="1.25" stroke-linejoin="round" stroke-opacity="0.85"/>
<path d="M743.3 508.9 C753.4 481.9 784.5 457.4 804.5 471.5" fill="none" stroke="#6a3810" stroke-width="1.25" stroke-linejoin="round" stroke-opacity="0.85"/>
<path d="M744.7 511.8 C754.8 484.8 785.8 459.8 805.8 473.9" fill="none" stroke="#6a3810" stroke-width="1.25" stroke-linejoin="round" stroke-opacity="0.85"/>
<path d="M746.2 514.6 C756.3 487.6 787.1 462.1 807.1 476.2" fill="none" stroke="#6a3810" stroke-width="1.25" stroke-linejoin="round" stroke-opacity="0.85"/>
<path d="M747.6 517.5 C757.7 490.5 788.4 464.5 808.4 478.6" fill="none" stroke="#6a3810" stroke-width="1.25" stroke-linejoin="round" stroke-opacity="0.85"/>
<path d="M749.1 520.4 C759.2 493.4 789.7 466.9 809.7 481" fill="none" stroke="#6a3810" stroke-width="1.25" stroke-linejoin="round" stroke-opacity="0.85"/>
<path d="M750.6 523.2 C760.7 496.2 791 469.2 811 483.4" fill="none" stroke="#6a3810" stroke-width="1.25" stroke-linejoin="round" stroke-opacity="0.85"/>
<path d="M752 526.1 C762.1 499.1 792.3 471.6 812.3 485.7" fill="none" stroke="#6a3810" stroke-width="1.25" stroke-linejoin="round" stroke-opacity="0.85"/>
<path d="M753.5 529 C763.6 502 793.6 474 813.6 488.1" fill="none" stroke="#6a3810" stroke-width="1.25" stroke-linejoin="round" stroke-opacity="0.85"/>
<path d="M755 531.9 C765.1 504.9 794.9 476.4 814.9 490.5" fill="none" stroke="#6a3810" stroke-width="1.25" stroke-linejoin="round" stroke-opacity="0.85"/>
<path d="M756.4 534.8 C766.5 507.8 796.2 478.8 816.2 492.9" fill="none" stroke="#6a3810" stroke-width="1.25" stroke-linejoin="round" stroke-opacity="0.85"/>
<polygon points="741.8,506 767.5,489.2 772,496 776,505 748,512" fill="#494953"/>
<polygon points="792,478 821,469 829,472 800,484 797,490" fill="#494953"/>
<polygon points="764,492 768,490 772,505 769,507" fill="#3b3b42"/>
<polygon points="794,479 798,477 803,491 800,493" fill="#3b3b42"/>
<polygon points="704.8,561.7 882.5,485.8 886.5,524 722,599.5 707.5,583" fill="url(#gbob1)"/>
<polygon points="721.5,598.5 886.5,523 889.5,532 723.5,608" fill="#3e3e46"/>
<polygon points="719.5,600 729.4,604 729.4,624.3 723.8,626.5" fill="#303036"/>
<polygon points="885.8,523.7 894.7,526 895.9,548.3 890.3,546.1" fill="#303036"/>
<polygon points="695.9,529.3 870.2,451.1 888,481.3 711.5,560.6" fill="#5a5a66"/>
<polygon points="711.5,560.6 888,481.3 888.3,484.5 712,564" fill="#2e2e35"/>
<polygon points="695.9,529.3 711.5,560.6 712.5,566.5 697,537" fill="#3b3b42"/>
<ellipse cx="731.5" cy="602.6" rx="4.6" ry="3.2" fill="#c9a227" transform="rotate(-20 731.5 602.6)"/>
<polygon points="732.2,597.6 737.4,595.5 738.6,604.9 733.6,607.1" fill="#55555d"/>
<ellipse cx="749.1" cy="594.6" rx="4.6" ry="3.2" fill="#c9a227" transform="rotate(-20 749.1 594.6)"/>
<polygon points="749.8,589.6 755,587.5 756.2,596.9 751.2,599.1" fill="#55555d"/>
<ellipse cx="766.7" cy="586.5" rx="4.6" ry="3.2" fill="#c9a227" transform="rotate(-20 766.7 586.5)"/>
<polygon points="767.4,581.5 772.6,579.4 773.8,588.8 768.8,591" fill="#55555d"/>
<ellipse cx="784.3" cy="578.5" rx="4.6" ry="3.2" fill="#c9a227" transform="rotate(-20 784.3 578.5)"/>
<polygon points="785,573.5 790.2,571.4 791.4,580.8 786.4,583" fill="#55555d"/>
<ellipse cx="801.9" cy="570.4" rx="4.6" ry="3.2" fill="#c9a227" transform="rotate(-20 801.9 570.4)"/>
<polygon points="802.6,565.4 807.8,563.3 809,572.7 804,574.9" fill="#55555d"/>
<ellipse cx="819.5" cy="562.4" rx="4.6" ry="3.2" fill="#c9a227" transform="rotate(-20 819.5 562.4)"/>
<polygon points="820.2,557.4 825.4,555.2 826.6,564.6 821.6,566.9" fill="#55555d"/>
<ellipse cx="837.1" cy="554.3" rx="4.6" ry="3.2" fill="#c9a227" transform="rotate(-20 837.1 554.3)"/>
<polygon points="837.8,549.3 843,547.2 844.2,556.6 839.2,558.8" fill="#55555d"/>
<ellipse cx="854.7" cy="546.2" rx="4.6" ry="3.2" fill="#c9a227" transform="rotate(-20 854.7 546.2)"/>
<polygon points="855.4,541.2 860.6,539.1 861.8,548.5 856.8,550.8" fill="#55555d"/>
<ellipse cx="872.3" cy="538.2" rx="4.6" ry="3.2" fill="#c9a227" transform="rotate(-20 872.3 538.2)"/>
<polygon points="873,533.2 878.2,531.1 879.4,540.5 874.4,542.7" fill="#55555d"/>
<polygon points="412,350 433.5,348.5 447.7,394.8 456.6,434 433.5,402" fill="#5b5b63"/>
<polygon points="433.5,402 447.7,394.8 458,434 452,440" fill="#26262a"/>
<polygon points="470.9,469.7 486.9,466.1 511.9,523.1 522.5,551.6 501.2,541" fill="#4a4a52"/>
<polygon points="486.9,466.1 492,470 524,545 522.5,551.6 511.9,523.1" fill="#1f1f23"/>
<polygon points="503,545 522,552 533,588 520,590" fill="#3a3a40"/>
<polygon points="303.1,221.8 520.6,655.6 557.6,772.6 347,350" fill="url(#ghs1l)"/>
<g clip-path="url(#chs1)">
<polyline points="303.6,221.8 347.6,350 580.4,790" fill="none" stroke="#5c5c68" stroke-width="1.5"/>
<polyline points="306.2,221.8 351.1,350 586.7,790" fill="none" stroke="#5c5c68" stroke-width="1.5"/>
<polyline points="308.8,221.8 354.6,350 593,790" fill="none" stroke="#5c5c68" stroke-width="1.5"/>
<polyline points="311.4,221.8 358.1,350 599.4,790" fill="none" stroke="#5c5c68" stroke-width="1.5"/>
</g>
<polyline points="345.8,351 556.1,773.1" fill="none" stroke="#e8efe8" stroke-width="1.1" stroke-opacity="0.9"/>
<polygon points="303.1,221.8 336.1,207 556.6,640.6 520.6,655.6" fill="url(#ghs1w)"/>
<polygon points="306.8,227.7 326.3,220.1 334.6,237.7 315.7,246" fill="url(#ghs1g)"/>
<polygon points="326.3,220.1 334.6,237.7 332.3,238.7 327.5,222.7" fill="#4a4a5a"/>
<polygon points="320.1,254.7 339.8,247 348.2,264.8 329.2,273.1" fill="url(#ghs1g)"/>
<polygon points="339.8,247 348.2,264.8 345.9,265.8 341,249.6" fill="#4a4a5a"/>
<polygon points="333.6,282 353.4,274.2 362,292.1 342.9,300.6" fill="url(#ghs1g)"/>
<polygon points="353.4,274.2 362,292.1 359.7,293.2 354.7,276.9" fill="#4a4a5a"/>
<polygon points="347.2,309.6 367.3,301.7 376,319.8 356.8,328.4" fill="url(#ghs1g)"/>
<polygon points="367.3,301.7 376,319.8 373.7,320.9 368.6,304.4" fill="#4a4a5a"/>
<polygon points="361,337.6 381.3,329.5 390.1,347.8 370.8,356.4" fill="url(#ghs1g)"/>
<polygon points="381.3,329.5 390.1,347.8 387.8,348.9 382.6,332.2" fill="#4a4a5a"/>
<polygon points="375,365.8 395.4,357.6 404.4,376.1 385.1,384.8" fill="url(#ghs1g)"/>
<polygon points="395.4,357.6 404.4,376.1 402.1,377.2 396.8,360.4" fill="#4a4a5a"/>
<polygon points="389.2,394.3 409.8,386 418.9,404.8 399.4,413.5" fill="url(#ghs1g)"/>
<polygon points="409.8,386 418.9,404.8 416.6,405.8 411.1,388.8" fill="#4a4a5a"/>
<polygon points="403.6,423.2 424.3,414.7 433.6,433.7 414,442.5" fill="url(#ghs1g)"/>
<polygon points="424.3,414.7 433.6,433.7 431.2,434.7 425.7,417.6" fill="#4a4a5a"/>
<polygon points="418.1,452.4 439,443.8 448.4,462.9 428.8,471.8" fill="url(#ghs1g)"/>
<polygon points="439,443.8 448.4,462.9 446,464 440.4,446.6" fill="#4a4a5a"/>
<polygon points="432.8,481.8 453.9,473.1 463.4,492.4 443.7,501.4" fill="url(#ghs1g)"/>
<polygon points="453.9,473.1 463.4,492.4 461,493.5 455.3,476" fill="#4a4a5a"/>
<polygon points="447.6,511.6 468.9,502.8 478.6,522.3 458.8,531.4" fill="url(#ghs1g)"/>
<polygon points="468.9,502.8 478.6,522.3 476.2,523.4 470.4,505.7" fill="#4a4a5a"/>
<polygon points="462.7,541.7 484.1,532.7 493.9,552.5 474,561.6" fill="url(#ghs1g)"/>
<polygon points="484.1,532.7 493.9,552.5 491.5,553.6 485.6,535.7" fill="#4a4a5a"/>
<polygon points="477.9,572.1 499.5,563 509.5,582.9 489.5,592.1" fill="url(#ghs1g)"/>
<polygon points="499.5,563 509.5,582.9 507.1,584 501,566" fill="#4a4a5a"/>
<polygon points="493.3,602.8 515.1,593.6 525.2,613.7 505.1,623" fill="url(#ghs1g)"/>
<polygon points="515.1,593.6 525.2,613.7 522.8,614.8 516.6,596.6" fill="#4a4a5a"/>
<polygon points="508.8,633.8 531.4,625.5 536.5,636.4 515.5,645.6" fill="url(#ghs1g)"/>
<polygon points="531.4,625.5 536.5,636.4 534,637.5 532.2,627.2" fill="#4a4a5a"/>
<polygon points="520.6,655.6 556.6,640.6 592,757 557,773" fill="url(#ghs1f)"/>
<ellipse cx="249.5" cy="400" rx="22" ry="13.5" fill="#39805f" transform="rotate(-14 249.5 400)"/>
<ellipse cx="249" cy="395.5" rx="22" ry="13.5" fill="url(#gchoke2)" transform="rotate(-14 249 395.5)"/>
<polygon points="226,384 268,376 270,386 228,394" fill="#357a5a"/>
<ellipse cx="246.5" cy="381" rx="21" ry="12" fill="#3f8767" transform="rotate(-14 246.5 381)"/>
<ellipse cx="244.3" cy="370.3" rx="27.5" ry="16.5" fill="url(#gchoke)" transform="rotate(-14 244.3 370.3)"/>
<ellipse cx="240.5" cy="374.5" rx="5" ry="2.6" fill="#b5e2cf" transform="rotate(-14 240.5 374.5)"/>
<polyline points="222,411 228,425 236,422" fill="none" stroke="#e8efe8" stroke-width="1.1" stroke-opacity="0.9"/>
<polyline points="228,433 240,460" fill="none" stroke="#e8efe8" stroke-width="1.1" stroke-opacity="0.9"/>
<polygon points="235.1,400.1 253.1,443.2 277.2,517.4 270,512 246,448 236,412" fill="#2a5cae"/>
<polygon points="253.1,443.2 348.3,402.1 362,432 352,486 319.3,497.4 277.2,517.4" fill="#3a72c4"/>
<polygon points="276,435.5 279.5,434 301,494 297,496" fill="#2a58a6"/>
<polygon points="328.3,411 332,409.5 343,442 339,444" fill="#2a58a6"/>
<polygon points="254,446 276,436.5 298,497 277.2,517.4" fill="#366cbc"/>
<polygon points="235.1,400.1 327.3,360 348.3,402.1 253.1,443.2" fill="#50a0f8"/>
<polygon points="235.1,400.1 256.1,391.1 276.2,434 253.1,443.2" fill="#4290ea"/>
<polygon points="306.2,369 327.3,360 348.3,402.1 328.3,410.5" fill="#4290ea"/>
<polygon points="283,381.5 306.2,372 308,376 285,385.5" fill="#4290ea"/>
<polygon points="323,483 329,480.5 330,483 324,485.5" fill="#6ab8f8"/>
<g transform="translate(265.3 401.6) rotate(-23.8)" font-family="'Liberation Sans',sans-serif" fill="#173a70" fill-opacity="0.92"><text x="0" y="0" font-size="11" textLength="46.5" lengthAdjust="spacingAndGlyphs">EPCOS</text><text x="1" y="13.4" font-size="9" textLength="45" lengthAdjust="spacingAndGlyphs" fill="#1f4a86">B82724-J</text></g>
<path d="M331.5 458 L336 492 L390 492 L392.5 452 Z" fill="url(#gsc)"/>
<ellipse cx="362" cy="456.3" rx="30.6" ry="26" fill="#322c86" transform="rotate(-15 362 456.3)"/>
<polygon points="378,437 388,441 392,452 386,462 378,455" fill="#ecc482"/>
<polyline points="381,444 389,447" fill="none" stroke="#6b4a2a" stroke-width="0.8"/>
<polyline points="380,450 388,454" fill="none" stroke="#6b4a2a" stroke-width="0.8"/>
<ellipse cx="360.9" cy="454.7" rx="22.5" ry="18.5" fill="#b0b8e8" transform="rotate(-15 360.9 454.7)"/>
<polyline points="346,470 357,447 380,458" fill="none" stroke="#8d8fc8" stroke-width="0.7"/>
<polyline points="357,447 356,438" fill="none" stroke="#8d8fc8" stroke-width="0.7"/>
<polyline points="224.8,437.4 252.7,499.4 262,520" fill="none" stroke="#e8efe8" stroke-width="1.1" stroke-opacity="0.9"/>
<polygon points="170.6,428.5 210.3,411.7 213,423 263.3,515 260,528.3 225,543.3 218,545.5 171.5,437" fill="#1c1c20"/>
<polygon points="170.6,428.5 210.3,411.7 213,421 174,437" fill="#2b2b30"/>
<polygon points="180,450.5 216.5,434 218,437 181.5,453.5" fill="#303036"/>
<path d="M184.7 444 Q193.5 422.5 210.3 433.2 Z" fill="#7c808a"/>
<path d="M189.5 441 Q195.5 426.5 205.5 434.3 Z" fill="#a4a8b2"/>
<ellipse cx="187" cy="441.7" rx="2.1" ry="1.6" fill="#e9ebef"/>
<ellipse cx="208.3" cy="432.7" rx="2.1" ry="1.6" fill="#e9ebef"/>
<polygon points="190,470 226.5,453.5 228,456.5 191.5,473" fill="#303036"/>
<path d="M194.7 463.5 Q203.5 442 220.3 452.7 Z" fill="#7c808a"/>
<path d="M199.5 460.5 Q205.5 446 215.5 453.8 Z" fill="#a4a8b2"/>
<ellipse cx="197" cy="461.2" rx="2.1" ry="1.6" fill="#e9ebef"/>
<ellipse cx="218.3" cy="452.2" rx="2.1" ry="1.6" fill="#e9ebef"/>
<polygon points="200,490.5 236.5,474 238,477 201.5,493.5" fill="#303036"/>
<path d="M204.7 484 Q213.5 462.5 230.3 473.2 Z" fill="#7c808a"/>
<path d="M209.5 481 Q215.5 466.5 225.5 474.3 Z" fill="#a4a8b2"/>
<ellipse cx="207" cy="481.7" rx="2.1" ry="1.6" fill="#e9ebef"/>
<ellipse cx="228.3" cy="472.7" rx="2.1" ry="1.6" fill="#e9ebef"/>
<polygon points="211,509 247.5,492.5 249,495.5 212.5,512" fill="#303036"/>
<path d="M215.7 502.5 Q224.5 481 241.3 491.7 Z" fill="#7c808a"/>
<path d="M220.5 499.5 Q226.5 485 236.5 492.8 Z" fill="#a4a8b2"/>
<ellipse cx="218" cy="500.2" rx="2.1" ry="1.6" fill="#e9ebef"/>
<ellipse cx="239.3" cy="491.2" rx="2.1" ry="1.6" fill="#e9ebef"/>
<polyline points="227.4,548.5 232.4,563 236,562" fill="none" stroke="#e8efe8" stroke-width="1.1" stroke-opacity="0.9"/>
<polyline points="235.8,567 241.3,581.5 278.2,565.3" fill="none" stroke="#e8efe8" stroke-width="1.1" stroke-opacity="0.9"/>
<polygon points="278.3,505 311.7,491.7 317.5,499 318,506 284,520" fill="#dc6410"/>
<polygon points="278.3,505 311.7,491.7 316.7,498.3 283.3,512" fill="#f6842c"/>
<polyline points="271.3,580.9 338.9,695.8 476.7,635.4 441.6,593.8" fill="none" stroke="#e8efe8" stroke-width="1.1" stroke-opacity="0.9"/>
<polygon points="269.2,536.9 281.9,533 284.3,572.1 274.6,576.8 267.6,560.4" fill="#2c2c31"/>
<ellipse cx="277.8" cy="581.5" rx="4.1" ry="3.6" fill="#c9a227" transform="rotate(-20 277.8 581.5)"/>
<ellipse cx="277.8" cy="581.5" rx="1.6" ry="1.4" fill="#f4ecd0" transform="rotate(-20 277.8 581.5)"/>
<ellipse cx="345.3" cy="578.3" rx="3.7" ry="3.2" fill="#c9a227" transform="rotate(-20 345.3 578.3)"/>
<ellipse cx="345.3" cy="578.3" rx="1.4" ry="1.2" fill="#f4ecd0" transform="rotate(-20 345.3 578.3)"/>
<ellipse cx="387.7" cy="551.6" rx="3.7" ry="3.2" fill="#c9a227" transform="rotate(-20 387.7 551.6)"/>
<ellipse cx="387.7" cy="551.6" rx="1.4" ry="1.2" fill="#f4ecd0" transform="rotate(-20 387.7 551.6)"/>
<polygon points="278.2,548.6 284.4,548.6 313.8,614.3 307.3,617.4" fill="#3b3b42"/>
<polygon points="405.5,495.3 415,489.4 415.7,513.3 438.1,562.5 436,561" fill="#3b3b42"/>
<polygon points="284.2,548.6 303.2,539.9 333,604.5 313,614.1" fill="#9a9aae"/>
<polygon points="385.6,503.9 405.5,495.2 436,560.7 415.3,569.4" fill="#9a9aae"/>
<polygon points="385.6,503.9 415.3,569.4 411.1,571.2 385.9,536.8 385.4,517.2" fill="#6a6a74"/>
<polygon points="306.1,544.2 311.8,533.7 336,518 355.3,507.5 372.1,502.8 384.5,505.7 391.1,520.6 389,536.3 383.8,543 329.9,573.9 323.2,580 310,551.2" fill="#494953"/>
<polygon points="262.7,524.9 349.6,488.4 350.2,483.9 404,467.7 415.6,485.5 414.8,496.9 385.5,504.3 372.1,502.8 355.3,507.5 336,518 311.8,533.7 306.1,544.2 284.4,548.6 273.3,551" fill="#5a5a66"/>
<polygon points="262.7,524.9 273.3,551 273.1,556.1 263.1,531.1" fill="#3b3b42"/>
<polyline points="349.1,492.3 355.1,504" fill="none" stroke="#2f2f35" stroke-width="1.2"/>
<path d="M323.4 546.2 C333.9 525.1 362 515.7 375.8 526.7 L401.7 591.3 C387.9 580.3 362.3 603.3 351.8 624.4 Z" fill="url(#gcoil2)"/>
<path d="M324.5 549.4 C335 528.3 363 518.3 376.8 529.3" fill="none" stroke="#6a3810" stroke-width="1.25" stroke-linejoin="round" stroke-opacity="0.85"/>
<path d="M325.7 552.6 C336.2 531.4 364.1 520.9 377.9 531.9" fill="none" stroke="#6a3810" stroke-width="1.25" stroke-linejoin="round" stroke-opacity="0.85"/>
<path d="M326.8 555.7 C337.3 534.6 365.1 523.5 378.9 534.6" fill="none" stroke="#6a3810" stroke-width="1.25" stroke-linejoin="round" stroke-opacity="0.85"/>
<path d="M328 558.9 C338.5 537.8 366.2 526.2 380 537.2" fill="none" stroke="#6a3810" stroke-width="1.25" stroke-linejoin="round" stroke-opacity="0.85"/>
<path d="M329.1 562.1 C339.6 541 367.2 528.8 381 539.8" fill="none" stroke="#6a3810" stroke-width="1.25" stroke-linejoin="round" stroke-opacity="0.85"/>
<path d="M330.3 565.3 C340.8 544.1 368.3 531.4 382.1 542.4" fill="none" stroke="#6a3810" stroke-width="1.25" stroke-linejoin="round" stroke-opacity="0.85"/>
<path d="M331.5 568.4 C342 547.3 369.3 534 383.1 545" fill="none" stroke="#6a3810" stroke-width="1.25" stroke-linejoin="round" stroke-opacity="0.85"/>
<path d="M332.6 571.6 C343.1 550.5 370.4 536.7 384.2 547.7" fill="none" stroke="#6a3810" stroke-width="1.25" stroke-linejoin="round" stroke-opacity="0.85"/>
<path d="M333.8 574.8 C344.3 553.7 371.4 539.3 385.2 550.3" fill="none" stroke="#6a3810" stroke-width="1.25" stroke-linejoin="round" stroke-opacity="0.85"/>
<path d="M334.9 577.9 C345.4 556.8 372.5 541.9 386.3 552.9" fill="none" stroke="#6a3810" stroke-width="1.25" stroke-linejoin="round" stroke-opacity="0.85"/>
<path d="M336.1 581.1 C346.6 560 373.5 544.5 387.3 555.5" fill="none" stroke="#6a3810" stroke-width="1.25" stroke-linejoin="round" stroke-opacity="0.85"/>
<path d="M337.2 584.3 C347.7 563.2 374.6 547.1 388.4 558.1" fill="none" stroke="#6a3810" stroke-width="1.25" stroke-linejoin="round" stroke-opacity="0.85"/>
<path d="M338.4 587.5 C348.9 566.3 375.6 549.8 389.4 560.8" fill="none" stroke="#6a3810" stroke-width="1.25" stroke-linejoin="round" stroke-opacity="0.85"/>
<path d="M339.5 590.6 C350 569.5 376.7 552.4 390.5 563.4" fill="none" stroke="#6a3810" stroke-width="1.25" stroke-linejoin="round" stroke-opacity="0.85"/>
<path d="M340.7 593.8 C351.2 572.7 377.8 555 391.6 566" fill="none" stroke="#6a3810" stroke-width="1.25" stroke-linejoin="round" stroke-opacity="0.85"/>
<path d="M341.8 597 C352.3 575.9 378.8 557.6 392.6 568.6" fill="none" stroke="#6a3810" stroke-width="1.25" stroke-linejoin="round" stroke-opacity="0.85"/>
<path d="M343 600.2 C353.5 579 379.9 560.2 393.7 571.2" fill="none" stroke="#6a3810" stroke-width="1.25" stroke-linejoin="round" stroke-opacity="0.85"/>
<path d="M344.2 603.3 C354.7 582.2 380.9 562.9 394.7 573.9" fill="none" stroke="#6a3810" stroke-width="1.25" stroke-linejoin="round" stroke-opacity="0.85"/>
<path d="M345.3 606.5 C355.8 585.4 382 565.5 395.8 576.5" fill="none" stroke="#6a3810" stroke-width="1.25" stroke-linejoin="round" stroke-opacity="0.85"/>
<path d="M346.5 609.7 C357 588.5 383 568.1 396.8 579.1" fill="none" stroke="#6a3810" stroke-width="1.25" stroke-linejoin="round" stroke-opacity="0.85"/>
<path d="M347.6 612.8 C358.1 591.7 384.1 570.7 397.9 581.7" fill="none" stroke="#6a3810" stroke-width="1.25" stroke-linejoin="round" stroke-opacity="0.85"/>
<path d="M348.8 616 C359.3 594.9 385.1 573.3 398.9 584.4" fill="none" stroke="#6a3810" stroke-width="1.25" stroke-linejoin="round" stroke-opacity="0.85"/>
<path d="M349.9 619.2 C360.4 598.1 386.2 576 400 587" fill="none" stroke="#6a3810" stroke-width="1.25" stroke-linejoin="round" stroke-opacity="0.85"/>
<path d="M351.1 622.4 C361.6 601.2 387.2 578.6 401 589.6" fill="none" stroke="#6a3810" stroke-width="1.25" stroke-linejoin="round" stroke-opacity="0.85"/>
<polygon points="343,600.2 364.3,587 367.1,592.3 369.2,599.3 347.1,604.8" fill="#494953"/>
<polygon points="384.2,578.2 407.2,571.2 413,573.5 389.7,582.9 386.8,587.6" fill="#494953"/>
<polygon points="361.4,589.2 364.6,587.6 366.1,599.3 363.6,600.9" fill="#3b3b42"/>
<polygon points="385.6,579 388.9,577.4 391.2,588.4 388.7,589.9" fill="#3b3b42"/>
<polygon points="309,643.7 452.4,584.2 464.4,616.4 332.8,674.7 318.1,661.8" fill="url(#gbob2)"/>
<polygon points="332.2,673.9 464.3,615.6 468.1,622.6 335.2,681.3" fill="#3e3e46"/>
<polygon points="330.7,675.1 339.8,678.2 342.5,694.1 337.9,695.8" fill="#303036"/>
<polygon points="463.8,616.1 471.7,618 475.7,635.4 470.6,633.6" fill="#303036"/>
<polygon points="305.6,618.4 446.6,557.1 457.1,580.7 314.2,642.9" fill="#5a5a66"/>
<polygon points="314.2,642.9 457.1,580.7 457,583.2 314.3,645.5" fill="#2e2e35"/>
<polygon points="305.6,618.4 314.2,642.9 314.4,647.5 305.6,624.4" fill="#3b3b42"/>
<ellipse cx="341" cy="677.1" rx="4.6" ry="3.2" fill="#c9a227" transform="rotate(-20 341 677.1)"/>
<polygon points="341.3,673.3 345.5,671.6 347.8,679 343.8,680.7" fill="#55555d"/>
<ellipse cx="359.8" cy="668.8" rx="4.6" ry="3.2" fill="#c9a227" transform="rotate(-20 359.8 668.8)"/>
<polygon points="360.1,665 364.3,663.3 366.6,670.7 362.6,672.4" fill="#55555d"/>
<ellipse cx="378.5" cy="660.5" rx="4.6" ry="3.2" fill="#c9a227" transform="rotate(-20 378.5 660.5)"/>
<polygon points="378.9,656.7 383.1,655.1 385.4,662.4 381.4,664.1" fill="#55555d"/>
<ellipse cx="397.3" cy="652.2" rx="4.6" ry="3.2" fill="#c9a227" transform="rotate(-20 397.3 652.2)"/>
<polygon points="397.7,648.4 401.9,646.8 404.2,654.1 400.1,655.8" fill="#55555d"/>
<ellipse cx="416.1" cy="643.9" rx="4.6" ry="3.2" fill="#c9a227" transform="rotate(-20 416.1 643.9)"/>
<polygon points="416.5,640.1 420.7,638.5 422.9,645.8 418.9,647.5" fill="#55555d"/>
<ellipse cx="434.9" cy="635.6" rx="4.6" ry="3.2" fill="#c9a227" transform="rotate(-20 434.9 635.6)"/>
<polygon points="435.2,631.8 439.4,630.2 441.7,637.5 437.7,639.2" fill="#55555d"/>
<ellipse cx="453.7" cy="627.3" rx="4.6" ry="3.2" fill="#c9a227" transform="rotate(-20 453.7 627.3)"/>
<polygon points="454,623.5 458.2,621.9 460.5,629.2 456.5,630.9" fill="#55555d"/>
<polygon points="224,530.6 229.6,542.3 231.8,548 236.9,559.1 244.7,575.9 239.1,569.2 225,536" fill="#c4540c"/>
<polygon points="229.6,542.3 265.9,529.5 267,534.5 231.8,548" fill="#c85a10"/>
<polygon points="236.9,559.1 271.5,545.1 277.1,562.5 244.7,575.9 239.1,569.2" fill="#d65c10"/>
<polygon points="224,530.6 260.9,516.5 265.9,529.5 229.6,542.3" fill="#f6842c"/>
<polygon points="231.8,548 267,534.5 271.5,545.1 236.9,559.1" fill="#f6842c"/>
<polyline points="243.5,590 259,628 266.5,625 251,587 243.5,590" fill="none" stroke="#e8efe8" stroke-width="1.1" stroke-opacity="0.9"/>
<polyline points="262,586 283,640" fill="none" stroke="#e8efe8" stroke-width="1.1" stroke-opacity="0.9"/>
<polyline points="276,581 298,634" fill="none" stroke="#e8efe8" stroke-width="1.1" stroke-opacity="0.9"/>
<polyline points="247.5,593 256.5,611" fill="none" stroke="#3f7fd0" stroke-width="4.4" stroke-linecap="round"/>
<polyline points="248.5,592.5 256,608" fill="none" stroke="#6aa6ea" stroke-width="1.4" stroke-linecap="round"/>
<polyline points="257,612 262.5,626" fill="none" stroke="#b9c0cc" stroke-width="1.3"/>
<ellipse cx="263" cy="628.5" rx="3.9" ry="3.4" fill="#c9a227" transform="rotate(-20 263 628.5)"/>
<ellipse cx="263" cy="628.5" rx="1.5" ry="1.3" fill="#f4ecd0" transform="rotate(-20 263 628.5)"/>
<polyline points="266.5,590 269.5,596" fill="none" stroke="#c0c4cc" stroke-width="1.4"/>
<polyline points="270,596 283.5,627" fill="none" stroke="#dcd6e0" stroke-width="11" stroke-linecap="round"/>
<polyline points="267.5,598.5 275.5,595.2" fill="none" stroke="#b44a3a" stroke-width="1.6"/>
<polyline points="269.5,603 277.5,599.8" fill="none" stroke="#8c84c0" stroke-width="1.6"/>
<polyline points="271.5,607.5 279.5,604.2" fill="none" stroke="#c9a050" stroke-width="1.4"/>
<polyline points="278,622 286,618.8" fill="none" stroke="#a89a90" stroke-width="1.4"/>
<polyline points="284.5,629 290,642" fill="none" stroke="#c0c4cc" stroke-width="2"/>
<ellipse cx="290.5" cy="644.5" rx="4.1" ry="3.6" fill="#c9a227" transform="rotate(-20 290.5 644.5)"/>
<ellipse cx="290.5" cy="644.5" rx="1.6" ry="1.4" fill="#f4ecd0" transform="rotate(-20 290.5 644.5)"/>
<ellipse cx="266.5" cy="636" rx="3" ry="2.6" fill="#c9a227" transform="rotate(-20 266.5 636)"/>
<ellipse cx="266.5" cy="636" rx="1.2" ry="1" fill="#f4ecd0" transform="rotate(-20 266.5 636)"/>
<polyline points="267.5,641 275,658" fill="none" stroke="#1d1d20" stroke-width="9.5" stroke-linecap="round"/>
<polyline points="270.5,656 281,651.5" fill="none" stroke="#d8d8dc" stroke-width="2.2"/>
<polyline points="276.5,661 283.5,675" fill="none" stroke="#c0c4cc" stroke-width="1.8"/>
<ellipse cx="284.5" cy="678" rx="4.6" ry="4" fill="#c9a227" transform="rotate(-20 284.5 678)"/>
<ellipse cx="284.5" cy="678" rx="1.8" ry="1.5" fill="#f4ecd0" transform="rotate(-20 284.5 678)"/>
<polygon points="313,683 324,678.5 329,692 318,696.5" fill="#8d8f9c"/>
<polygon points="314.5,686 323,682.5 326,690 317.5,693.5" fill="#6b6d78"/>
<polygon points="295.5,704 311,697.5 313.5,703.5 298,710" fill="#e8d9b8"/>
<polygon points="299,703 308.5,699 310.5,703.5 301,707.5" fill="#e07c28"/>
<polygon points="426.5,813 433,810.5 435.5,819.5 429,822" fill="#d8d2a8" stroke="#e8efe8" stroke-width="0.8" stroke-linejoin="round"/>
<polygon points="428.5,815 432,813.6 433.2,817.6 429.7,819" fill="#8c8a5a"/>
<polygon points="444.5,805 451,802.5 453.5,811.5 447,814" fill="#d8d2a8" stroke="#e8efe8" stroke-width="0.8" stroke-linejoin="round"/>
<polygon points="446.5,807 450,805.6 451.2,809.6 447.7,811" fill="#8c8a5a"/>
<polygon points="464.5,796 471,793.5 473.5,802.5 467,805" fill="#d8d2a8" stroke="#e8efe8" stroke-width="0.8" stroke-linejoin="round"/>
<polygon points="466.5,798 470,796.6 471.2,800.6 467.7,802" fill="#8c8a5a"/>
<polygon points="483.5,787 490,784.5 492.5,793.5 486,796" fill="#d8d2a8" stroke="#e8efe8" stroke-width="0.8" stroke-linejoin="round"/>
<polygon points="485.5,789 489,787.6 490.2,791.6 486.7,793" fill="#8c8a5a"/>
<polygon points="501.5,779 508,776.5 510.5,785.5 504,788" fill="#d8d2a8" stroke="#e8efe8" stroke-width="0.8" stroke-linejoin="round"/>
<polygon points="503.5,781 507,779.6 508.2,783.6 504.7,785" fill="#8c8a5a"/>
<polygon points="519.5,771 526,768.5 528.5,777.5 522,780" fill="#d8d2a8" stroke="#e8efe8" stroke-width="0.8" stroke-linejoin="round"/>
<polygon points="521.5,773 525,771.6 526.2,775.6 522.7,777" fill="#8c8a5a"/>
<polygon points="469,708 489,699 494,710 474,719" fill="#2f2f33"/>
<polygon points="431,726 451,717 456,728 436,737" fill="#2f2f33"/>
<polygon points="393,743 413,734 418,745 398,754" fill="#2f2f33"/>
<ellipse cx="473" cy="694.5" rx="22.5" ry="18.5" fill="none" transform="rotate(-15 473 694.5)" stroke="#e8efe8" stroke-width="1"/>
<path d="M443.2 665.7 L453.7 698.7 A20 17 -15 0 0 492.3 688.3 L481.8 655.3 Z" fill="url(#gsm0)"/>
<ellipse cx="462.5" cy="660.5" rx="20" ry="17" fill="#2d2858" transform="rotate(-15 462.5 660.5)"/>
<path d="M443.2 665.7 A20 17 -15 0 0 451.9 675 L450.9 663.5 Z" fill="#9fb8ea"/>
<ellipse cx="462" cy="659.3" rx="14.8" ry="12.6" fill="url(#gst0)" transform="rotate(-15 462 659.3)"/>
<polyline points="456.5,662 468.5,657" fill="none" stroke="#b9bdd6" stroke-width="1"/>
<polyline points="463,659.5 466,668.5" fill="none" stroke="#b9bdd6" stroke-width="1"/>
<ellipse cx="435.2" cy="711.5" rx="22.5" ry="18.5" fill="none" transform="rotate(-15 435.2 711.5)" stroke="#e8efe8" stroke-width="1"/>
<path d="M405.4 682.7 L415.9 715.7 A20 17 -15 0 0 454.5 705.3 L444 672.3 Z" fill="url(#gsm1)"/>
<ellipse cx="424.7" cy="677.5" rx="20" ry="17" fill="#2d2858" transform="rotate(-15 424.7 677.5)"/>
<path d="M405.4 682.7 A20 17 -15 0 0 414.1 692 L413.1 680.5 Z" fill="#9fb8ea"/>
<ellipse cx="424.2" cy="676.3" rx="14.8" ry="12.6" fill="url(#gst1)" transform="rotate(-15 424.2 676.3)"/>
<polyline points="418.7,679 430.7,674" fill="none" stroke="#b9bdd6" stroke-width="1"/>
<polyline points="425.2,676.5 428.2,685.5" fill="none" stroke="#b9bdd6" stroke-width="1"/>
<ellipse cx="397.5" cy="728.7" rx="22.5" ry="18.5" fill="none" transform="rotate(-15 397.5 728.7)" stroke="#e8efe8" stroke-width="1"/>
<path d="M367.7 699.9 L378.2 732.9 A20 17 -15 0 0 416.8 722.5 L406.3 689.5 Z" fill="url(#gsm2)"/>
<ellipse cx="387" cy="694.7" rx="20" ry="17" fill="#2d2858" transform="rotate(-15 387 694.7)"/>
<path d="M367.7 699.9 A20 17 -15 0 0 376.4 709.2 L375.4 697.7 Z" fill="#9fb8ea"/>
<ellipse cx="386.5" cy="693.5" rx="14.8" ry="12.6" fill="url(#gst2)" transform="rotate(-15 386.5 693.5)"/>
<polyline points="381,696.2 393,691.2" fill="none" stroke="#b9bdd6" stroke-width="1"/>
<polyline points="387.5,693.7 390.5,702.7" fill="none" stroke="#b9bdd6" stroke-width="1"/>
<ellipse cx="504.3" cy="758.8" rx="22.5" ry="18.5" fill="none" transform="rotate(-15 504.3 758.8)" stroke="#e8efe8" stroke-width="1"/>
<path d="M474.5 730 L485 763 A20 17 -15 0 0 523.6 752.6 L513.1 719.6 Z" fill="url(#gsm3)"/>
<ellipse cx="493.8" cy="724.8" rx="20" ry="17" fill="#2d2858" transform="rotate(-15 493.8 724.8)"/>
<path d="M474.5 730 A20 17 -15 0 0 483.2 739.2 L482.2 727.8 Z" fill="#9fb8ea"/>
<ellipse cx="493.3" cy="723.6" rx="14.8" ry="12.6" fill="url(#gst3)" transform="rotate(-15 493.3 723.6)"/>
<polyline points="487.8,726.3 499.8,721.3" fill="none" stroke="#b9bdd6" stroke-width="1"/>
<polyline points="494.3,723.8 497.3,732.8" fill="none" stroke="#b9bdd6" stroke-width="1"/>
<ellipse cx="465.5" cy="776" rx="22.5" ry="18.5" fill="none" transform="rotate(-15 465.5 776)" stroke="#e8efe8" stroke-width="1"/>
<path d="M435.7 747.2 L446.2 780.2 A20 17 -15 0 0 484.8 769.8 L474.3 736.8 Z" fill="url(#gsm4)"/>
<ellipse cx="455" cy="742" rx="20" ry="17" fill="#2d2858" transform="rotate(-15 455 742)"/>
<path d="M435.7 747.2 A20 17 -15 0 0 444.4 756.5 L443.4 745 Z" fill="#9fb8ea"/>
<ellipse cx="454.5" cy="740.8" rx="14.8" ry="12.6" fill="url(#gst4)" transform="rotate(-15 454.5 740.8)"/>
<polyline points="449,743.5 461,738.5" fill="none" stroke="#b9bdd6" stroke-width="1"/>
<polyline points="455.5,741 458.5,750" fill="none" stroke="#b9bdd6" stroke-width="1"/>
<ellipse cx="427.5" cy="794" rx="22.5" ry="18.5" fill="none" transform="rotate(-15 427.5 794)" stroke="#e8efe8" stroke-width="1"/>
<path d="M397.7 765.2 L408.2 798.2 A20 17 -15 0 0 446.8 787.8 L436.3 754.8 Z" fill="url(#gsm5)"/>
<ellipse cx="417" cy="760" rx="20" ry="17" fill="#2d2858" transform="rotate(-15 417 760)"/>
<path d="M397.7 765.2 A20 17 -15 0 0 406.4 774.5 L405.4 763 Z" fill="#9fb8ea"/>
<ellipse cx="416.5" cy="758.8" rx="14.8" ry="12.6" fill="url(#gst5)" transform="rotate(-15 416.5 758.8)"/>
<polyline points="411,761.5 423,756.5" fill="none" stroke="#b9bdd6" stroke-width="1"/>
<polyline points="417.5,759 420.5,768" fill="none" stroke="#b9bdd6" stroke-width="1"/>
<polyline points="58.3,837.7 99,819.5" fill="none" stroke="#d94a4a" stroke-width="0.8"/>
<polygon points="100,819 94.5,818.7 96,822.2" fill="#d83a3a"/>
<polyline points="58.3,837.7 41,806.5" fill="none" stroke="#86dc90" stroke-width="0.8"/>
<polygon points="40,804.8 39.7,808.8 43,807" fill="#66c870"/>
<polyline points="58.3,837.7 50.8,808.6" fill="none" stroke="#4a4ac0" stroke-width="0.9"/>
<g font-family="'Liberation Sans',sans-serif" font-size="6.5"><text x="104.8" y="818.3" fill="#e06666">x</text><text x="34.2" y="800" fill="#74c47c">Y</text></g>
</svg>
<div id="strip"></div><div id="redge"></div><div id="bedge"></div>
<div id="tb" style="position:absolute;left:0;top:0;width:547px;height:35px;background:#efefef;border-top:1px solid #d0d0d0;box-sizing:border-box"></div>
<div style="position:absolute;left:0;top:2px;width:42px;height:31px;box-sizing:border-box;border:1px solid #c9c9c9;border-left:none;border-radius:0 3px 3px 0;background:linear-gradient(#e4e4e4,#d6d6d6)"></div>
<div style="position:absolute;left:31px;top:3px;width:1px;height:29px;background:#c2c2c2"></div>
<div style="position:absolute;left:48px;top:6px;width:1px;height:24px;background:#d4d4d4"></div>
<div style="position:absolute;left:91px;top:7px;width:148px;height:23px;box-sizing:border-box;border:1px solid #6e6e6e;background:#fff;font-size:13px;line-height:21px;padding-left:3px;color:#000"></div>
<div style="position:absolute;left:243px;top:2px;width:32px;height:31px;box-sizing:border-box;border:1px solid #c8c8c8;border-radius:3px;background:linear-gradient(90deg,#ecdcd2,#d6e2f0 25%,#d6e2f0 75%,#ecdcd2)"></div>
<div style="position:absolute;left:280px;top:6px;width:1px;height:24px;background:#d4d4d4"></div>
<div style="position:absolute;left:412px;top:2px;width:42px;height:31px;box-sizing:border-box;border:1px solid #c4c4c4;border-radius:3px;background:linear-gradient(#e0e0e0,#d6d6d6)"></div>
<div style="position:absolute;left:442px;top:3px;width:1px;height:29px;background:#c0c0c0"></div>
<svg style="position:absolute;left:0;top:0" width="547" height="35" viewBox="0 0 547 35">
<defs>
<linearGradient id="tg1" x1="0" y1="0" x2="0" y2="1"><stop offset="0" stop-color="#c8c8c8"/><stop offset="1" stop-color="#7a7a7a"/></linearGradient>
<linearGradient id="tg2" x1="0" y1="0" x2="1" y2="1"><stop offset="0" stop-color="#fff6c0"/><stop offset="1" stop-color="#f2c94c"/></linearGradient>
</defs>
<!-- rotate/navigate icon -->
<g>
<path d="M17.5 6.8 L27.6 16.9 L17.5 27.6 L6.6 16.9 Z" fill="#4d8fd0"/>
<path d="M17.5 9 L25.4 16.9 L17.5 25.2 L9 16.9 Z" fill="#6aa9e2"/>
<circle cx="17.9" cy="8.4" r="3.1" fill="#55585f"/><circle cx="18.2" cy="26.2" r="3.1" fill="#4a4d54"/>
<circle cx="7.6" cy="16.7" r="3.1" fill="#5c5f66"/><circle cx="26.2" cy="16.5" r="3.1" fill="#55585f"/>
<circle cx="18.6" cy="8.5" r="1.1" fill="#f0f2f5"/><circle cx="26" cy="15.9" r="1.1" fill="#f0f2f5"/><circle cx="18.8" cy="26.3" r="1.1" fill="#f0f2f5"/><circle cx="8" cy="16.2" r="1.1" fill="#f0f2f5"/>
<path d="M13.4 13.3 L16 11.8 L19 14.3 L16.3 15.9 Z" fill="#0d2f50"/>
<path d="M13.2 23.6 L16.2 21.4 L19 23.2 L16 25.3 Z" fill="#0d2f50"/>
<path d="M9.8 17.6 L12 16.4 L13.2 19.6 L11 21.2 Z" fill="#0d2f50"/>
<path d="M19.6 17 L22 16 L22.3 19.6 L20 21.6 Z" fill="#0d2f50"/>
</g>
<path d="M33 16 L39.5 16 L36.2 20 Z" fill="#7f7f7f"/>
<!-- home -->
<path d="M66.5 17.5 L66.5 24.5 L77.5 24.5 L77.5 17.5 L72 12 Z" fill="#fbe28a" stroke="#e8b646" stroke-width="0.8"/>
<path d="M64.3 18.3 L72 10.6 L79.7 18.3" fill="none" stroke="#a9342c" stroke-width="1.9" stroke-linejoin="miter"/>
<rect x="70.4" y="19.3" width="3.4" height="5.2" fill="#b5781a"/>
<text x="95" y="22.8" font-family="'Liberation Sans',sans-serif" font-size="12.6" fill="#000" textLength="28.8" lengthAdjust="spacingAndGlyphs">Виды</text>
<!-- chevron -->
<path d="M226.5 16.8 L230.3 20.6 L234.1 16.8" fill="none" stroke="#3c3c3c" stroke-width="1.2"/>
<!-- tree icon -->
<g fill="none" stroke="#1c6db2" stroke-width="1.3">
<path d="M255 9.3 H268.7 M252.3 12.5 V25.8 H259.5 M252.3 17.4 H259.5 M265.5 17.4 H268.7 M265.5 25.8 H268.7"/>
<rect x="249.4" y="6.6" width="5.8" height="5.8" fill="#dff6ff"/>
<rect x="259.6" y="14.5" width="5.8" height="5.8" fill="#dff6ff"/>
<rect x="259.6" y="22.9" width="5.8" height="5.8" fill="#dff6ff"/>
</g>
<!-- play -->
<path d="M296.5 11.5 L312 18 L296.5 24.5 Z" fill="url(#tg1)" stroke="#5a5a5a" stroke-width="1"/>
<path d="M319 16.2 L325.8 16.2 L322.4 20.2 Z" fill="#bdbdbd"/>
<!-- cube 1 -->
<path d="M341 12.2 L352.5 8.6 L359.5 11.3 L350 15 Z" fill="#9bd0f6"/>
<path d="M341 12.2 L350 15 L350.3 26.2 L342.8 21.8 Z" fill="#4d9ee4"/>
<path d="M350 15 L359.5 11.3 L358 21.5 L350.3 26.2 Z" fill="#1e5fb2"/>
<!-- cube 2 + green -->
<path d="M380 10.5 L391 6.8 L398 9.6 L388.5 13.3 Z" fill="#9bd0f6"/>
<path d="M380 10.5 L388.5 13.3 L388.8 25.6 L381.5 21.4 Z" fill="#4d9ee4"/>
<path d="M388.5 13.3 L398 9.6 L397 20.5 L388.8 25.6 Z" fill="#1e5fb2"/>
<rect x="374.5" y="17.6" width="11" height="10.6" fill="#62c81f" stroke="#3b8d12" stroke-width="1"/>
<path d="M401.5 16.8 L408.1 16.8 L404.8 20.8 Z" fill="#666"/>
<!-- lamp -->
<ellipse cx="427.8" cy="25.3" rx="6.2" ry="2.3" fill="#6f7278"/>
<ellipse cx="427.8" cy="24.3" rx="4.6" ry="1.5" fill="#9a9da3"/>
<path d="M428 24 L421.3 17 L425.6 9.6" fill="none" stroke="#5d6066" stroke-width="1.5"/>
<path d="M424.5 8.2 L432.5 10 L438 12.5 L429 19.5 Z" fill="#e9e9ea" stroke="#66696f" stroke-width="0.9"/>
<ellipse cx="434" cy="15.6" rx="5" ry="3.1" fill="url(#tg2)" stroke="#7a6a2a" stroke-width="0.7" transform="rotate(-38 434 15.6)"/>
<path d="M444.2 16.2 L450.8 16.2 L447.5 20.2 Z" fill="#6c6c6c"/>
<!-- white square -->
<rect x="467.7" y="10.5" width="15" height="15.3" fill="#fff" stroke="#6f6f6f" stroke-width="1"/>
<path d="M490.3 16.8 L497.5 16.8 L493.9 21 Z" fill="#666"/>
<!-- cross section icon -->
<path d="M512.5 7.3 L509 19.5 L514.8 21.8 L516.2 7.5 Z" fill="#d4344f"/>
<path d="M516.2 7.5 L514.8 21.8 L517.5 20 L518.6 8 Z" fill="#7a1e34"/>
<path d="M518.6 8 L517.5 20 L525 26.5 L527.5 24.5 L521.5 8.6 Z" fill="#d4344f"/>
<path d="M521.5 8.6 L527.5 24.5 L528.3 23 L523 8 Z" fill="#5aa8de"/>
<path d="M512.5 7.3 L516 6.5 L523 8 L521.5 8.6 L516.2 7.5 Z" fill="#8fc9ee"/>
<path d="M533.3 16.2 L540 16.2 L536.6 20.3 Z" fill="#666"/>
</svg>

</body></html>
